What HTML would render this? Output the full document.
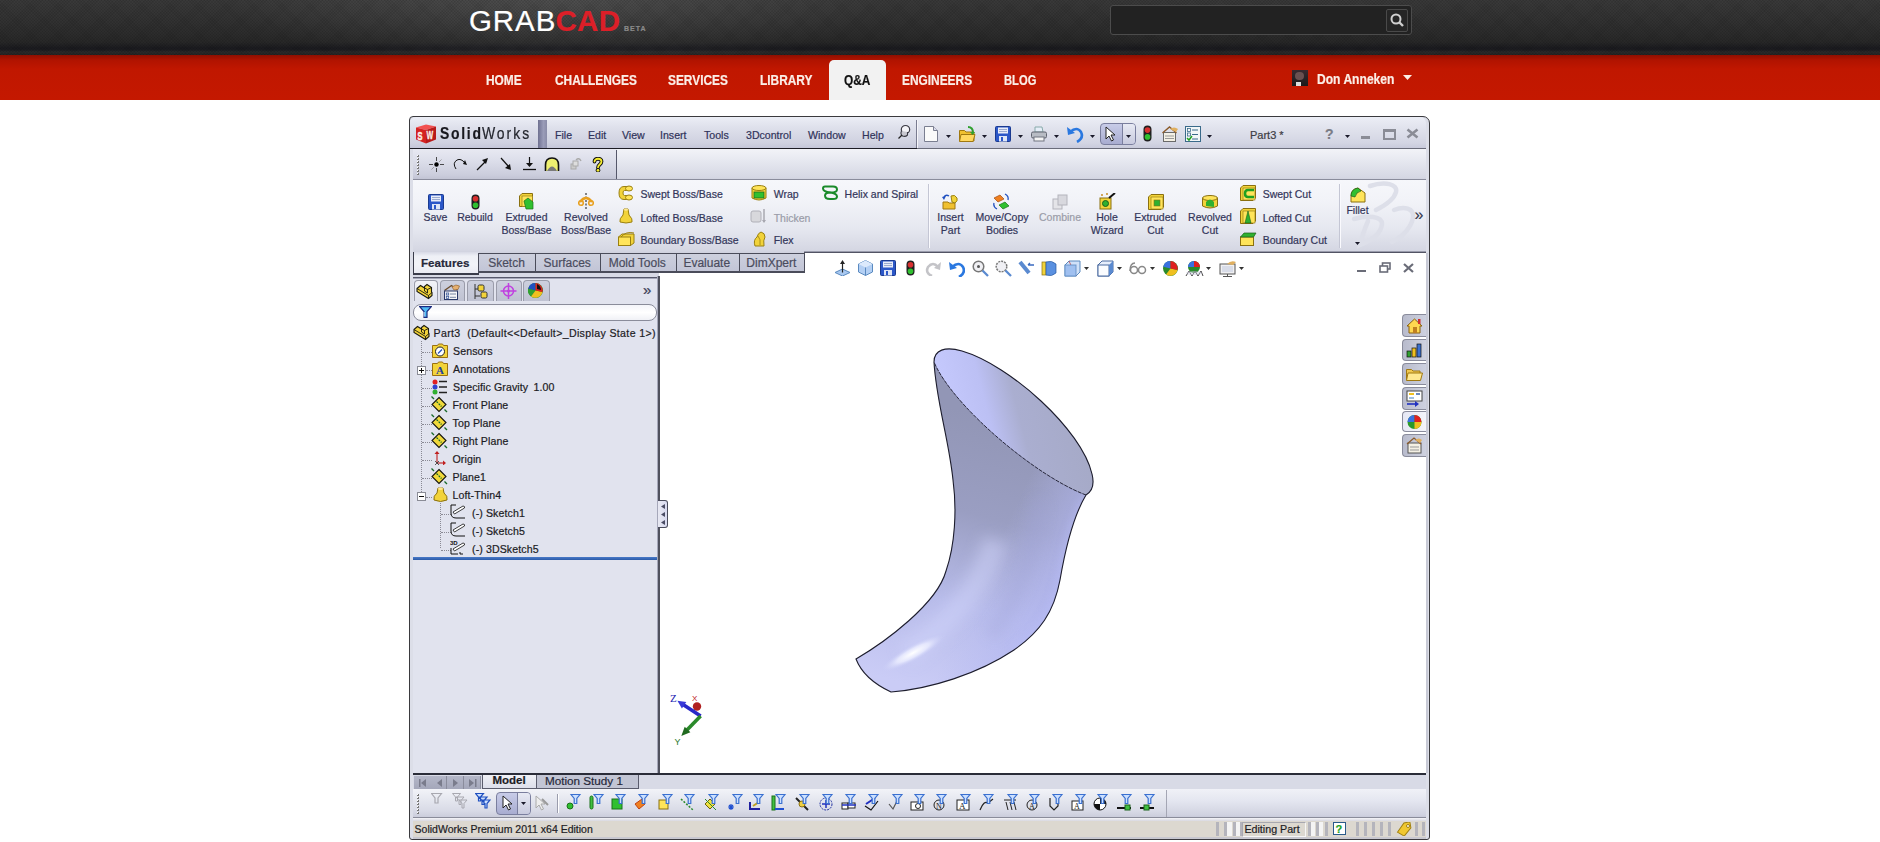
<!DOCTYPE html><html><head><meta charset="utf-8"><style>
html,body{margin:0;padding:0;}
body{width:1880px;height:842px;overflow:hidden;position:relative;background:#fff;font-family:"Liberation Sans", sans-serif;}
.t{position:absolute;white-space:nowrap;-webkit-text-stroke:0.2px currentColor;}
</style></head><body>

<div style="position:absolute;left:0px;top:0px;width:1880px;height:55px;background:radial-gradient(ellipse 330px 70px at 560px 0px,rgba(255,255,255,0.11),rgba(255,255,255,0) 100%),linear-gradient(#393939 0px,#323232 20px,#282828 42px,#1b1b1f 48px,#1d1d21 50px,#2a2a2a 52px,#242424 55px);"></div>
<div style="position:absolute;left:0px;top:0px;width:1880px;height:55px;background:repeating-linear-gradient(45deg,rgba(0,0,0,0.08) 0px,rgba(0,0,0,0.08) 1px,rgba(0,0,0,0) 1px,rgba(0,0,0,0) 2.2px),repeating-linear-gradient(-45deg,rgba(0,0,0,0.08) 0px,rgba(0,0,0,0.08) 1px,rgba(0,0,0,0) 1px,rgba(0,0,0,0) 2.2px);"></div>
<div style="position:absolute;left:0px;top:55px;width:1880px;height:45px;background:linear-gradient(#8e0f00 0px,#b01300 5px,#c01700 14px,#c41800 100%);"></div>
<div class="t" style="left:469px;top:6.03px;font-size:29.5px;line-height:29.5px;color:#ffffff;font-weight:normal;letter-spacing:0.9px;">GRAB</div>
<div class="t" style="left:555.5px;top:6.03px;font-size:29.5px;line-height:29.5px;color:#dc1f28;font-weight:bold;letter-spacing:0.3px;">CAD</div>
<div class="t" style="left:624px;top:25.07px;font-size:7px;line-height:7px;color:#8a8a8a;font-weight:bold;letter-spacing:1px;">BETA</div>
<div style="position:absolute;left:1110px;top:5px;width:302px;height:30px;background:#222;border:1px solid #4c4c4c;border-radius:3px;box-sizing:border-box;"></div>
<div style="position:absolute;left:1386px;top:9px;width:22px;height:23px;background:#262626;border:1px solid #4a4a4a;border-radius:2px;box-sizing:border-box;"></div>
<svg style="position:absolute;left:1389px;top:12px;" width="16" height="16" viewBox="0 0 16 16"><circle cx="7" cy="7" r="4.5" fill="none" stroke="#d0d0d0" stroke-width="2"/><line x1="10" y1="10" x2="14" y2="14" stroke="#d0d0d0" stroke-width="2.4"/></svg>
<div style="position:absolute;left:829px;top:60px;width:57px;height:40px;background:#f2f2f2;border-radius:5px 5px 0 0;"></div>
<div class="t nav" style="left:486px;top:73.15px;font-size:14px;line-height:14px;color:#fbeee6;font-weight:bold;width:36px;"><span style="display:inline-block;transform-origin:0 0;transform:scaleX(0.85);">HOME</span></div>
<div class="t nav" style="left:555px;top:73.15px;font-size:14px;line-height:14px;color:#fbeee6;font-weight:bold;width:81px;"><span style="display:inline-block;transform-origin:0 0;transform:scaleX(0.85);">CHALLENGES</span></div>
<div class="t nav" style="left:668px;top:73.15px;font-size:14px;line-height:14px;color:#fbeee6;font-weight:bold;width:60px;"><span style="display:inline-block;transform-origin:0 0;transform:scaleX(0.85);">SERVICES</span></div>
<div class="t nav" style="left:760px;top:73.15px;font-size:14px;line-height:14px;color:#fbeee6;font-weight:bold;width:53px;"><span style="display:inline-block;transform-origin:0 0;transform:scaleX(0.85);">LIBRARY</span></div>
<div class="t nav" style="left:844px;top:73.15px;font-size:14px;line-height:14px;color:#111;font-weight:bold;width:27px;"><span style="display:inline-block;transform-origin:0 0;transform:scaleX(0.85);">Q&amp;A</span></div>
<div class="t nav" style="left:902px;top:73.15px;font-size:14px;line-height:14px;color:#fbeee6;font-weight:bold;width:70px;"><span style="display:inline-block;transform-origin:0 0;transform:scaleX(0.85);">ENGINEERS</span></div>
<div class="t nav" style="left:1004px;top:73.15px;font-size:14px;line-height:14px;color:#fbeee6;font-weight:bold;width:32px;"><span style="display:inline-block;transform-origin:0 0;transform:scaleX(0.8);">BLOG</span></div>
<div style="position:absolute;left:1292px;top:70px;width:16px;height:16px;background:linear-gradient(#3a2a30,#1a1a1a);"></div>
<div style="position:absolute;left:1295px;top:72px;width:9px;height:8px;background:#6a5050;border-radius:4px;"></div>
<div style="position:absolute;left:1296px;top:82px;width:5px;height:4px;background:#ddd;"></div>
<div class="t" style="left:1317px;top:72.15px;font-size:14px;line-height:14px;color:#fbeee6;font-weight:bold;transform:scaleX(0.863);transform-origin:0 0;">Don Anneken</div>
<svg style="position:absolute;left:1403px;top:75px;" width="9" height="6" viewBox="0 0 9 6"><polygon points="0,0 9,0 4.5,5" fill="#fbeee6"/></svg>
<div style="position:absolute;left:409px;top:116px;width:1021px;height:724px;background:#dcdee8;border:1px solid #3a3a3e;box-sizing:border-box;border-radius:4px 7px 3px 3px;"></div>
<div style="position:absolute;left:410px;top:117px;width:507px;height:31px;background:linear-gradient(#eceef6 0px,#dfe1ec 10px,#cfd1e0 26px,#c4c6d8 31px);border-radius:6px 0 0 0;"></div>
<div style="position:absolute;left:917px;top:117px;width:509px;height:31px;background:linear-gradient(#eceef6 0px,#e2e4ee 10px,#d3d5e3 26px,#c8cadb 31px);border-radius:0 6px 0 0;"></div>
<div style="position:absolute;left:410px;top:148px;width:507px;height:1px;background:#1c1c24;"></div>
<div style="position:absolute;left:917px;top:148px;width:509px;height:1px;background:#6a6c7a;"></div>
<div style="position:absolute;left:538px;top:120px;width:9px;height:28px;background:linear-gradient(90deg,#6e7090,#9a9cb8 60%,#8a8ca8);"></div>
<div style="position:absolute;left:916px;top:120px;width:1px;height:28px;background:#7a7c90;"></div>
<div style="position:absolute;left:917px;top:120px;width:1px;height:28px;background:#f6f6fa;"></div>
<svg style="position:absolute;left:415px;top:123px;" width="22" height="22" viewBox="0 0 22 22"><polygon points="1,4.5 11,1.5 21,3.5 11,7" fill="#f25050"/><polygon points="1,4.5 11,7 11,20.5 1,16.5" fill="#d42222"/><polygon points="11,7 21,3.5 21,16.5 11,20.5" fill="#b81a1a"/><g transform="translate(2.4,16.8) scale(0.82,1.28)"><text x="0" y="0" font-family="Liberation Sans" font-weight="bold" font-size="9" fill="#fbeee6" stroke="#fbeee6" stroke-width="0.45">S</text></g><g transform="translate(11.4,16.2) scale(0.78,1.25)"><text x="0" y="0" font-family="Liberation Sans" font-weight="bold" font-size="9" fill="#fbeee6" stroke="#fbeee6" stroke-width="0.3">W</text></g></svg>
<div class="t" style="left:439.5px;top:125.21px;font-size:17px;line-height:17px;color:#18181e;font-weight:bold;letter-spacing:2.1px;transform:scaleX(0.82);transform-origin:0 0;">Solid</div>
<div class="t" style="left:481.5px;top:125.21px;font-size:17px;line-height:17px;color:#24262e;font-weight:normal;letter-spacing:2.4px;transform:scaleX(0.82);transform-origin:0 0;">Works</div>
<div class="t" style="left:555px;top:130.33px;font-size:10.6px;line-height:10.6px;color:#30335a;font-weight:normal;">File</div>
<div class="t" style="left:588px;top:130.33px;font-size:10.6px;line-height:10.6px;color:#30335a;font-weight:normal;">Edit</div>
<div class="t" style="left:622px;top:130.33px;font-size:10.6px;line-height:10.6px;color:#30335a;font-weight:normal;">View</div>
<div class="t" style="left:660px;top:130.33px;font-size:10.6px;line-height:10.6px;color:#30335a;font-weight:normal;">Insert</div>
<div class="t" style="left:704px;top:130.33px;font-size:10.6px;line-height:10.6px;color:#30335a;font-weight:normal;">Tools</div>
<div class="t" style="left:746px;top:130.33px;font-size:10.6px;line-height:10.6px;color:#30335a;font-weight:normal;">3Dcontrol</div>
<div class="t" style="left:808px;top:130.33px;font-size:10.6px;line-height:10.6px;color:#30335a;font-weight:normal;">Window</div>
<div class="t" style="left:862px;top:130.33px;font-size:10.6px;line-height:10.6px;color:#30335a;font-weight:normal;">Help</div>
<svg style="position:absolute;left:897px;top:124px;" width="14" height="16" viewBox="0 0 14 16"><ellipse cx="8.5" cy="5.5" rx="4.2" ry="4" fill="#f4f4f8" stroke="#3a3a44" stroke-width="1.2"/><path d="M4.5,7 q-1.5,3 1,5 q3,1 5,-1 l0,-3" fill="#c8c8d0" stroke="#3a3a44" stroke-width="1.1"/><line x1="5" y1="11" x2="1.5" y2="14.5" stroke="#222" stroke-width="1.2"/></svg>
<svg style="position:absolute;left:924px;top:126px;" width="14" height="16" viewBox="0 0 14 16"><path d="M0.5,0.5 h9 l4,4 v11 h-13 z" fill="#fafafa" stroke="#7a7e90"/><path d="M9.5,0.5 v4 h4" fill="#dde" stroke="#7a7e90"/></svg>
<svg style="position:absolute;left:946px;top:135px;" width="6" height="4" viewBox="0 0 6 4"><polygon points="0,0 5,0 2.5,3" fill="#1a1a2a"/></svg>
<svg style="position:absolute;left:959px;top:126px;" width="17" height="16" viewBox="0 0 17 16"><path d="M0.5,4.5 h5 l1.5,1.5 h8 v9 h-14.5 z" fill="#f0c030" stroke="#a07810"/><path d="M2,8.5 h14 l-2,7 h-13.5 z" fill="#ffd860" stroke="#a07810"/><path d="M9,1 q5,0 5,6" fill="none" stroke="#30a030" stroke-width="2"/><polygon points="11,6 16,6 13.5,9" fill="#30a030"/></svg>
<svg style="position:absolute;left:982px;top:135px;" width="6" height="4" viewBox="0 0 6 4"><polygon points="0,0 5,0 2.5,3" fill="#1a1a2a"/></svg>
<svg style="position:absolute;left:995px;top:126px;" width="16" height="16" viewBox="0 0 16 16"><rect x="0.5" y="0.5" width="15" height="15" rx="1" fill="#2b57c8" stroke="#1a3a90"/><rect x="3" y="1.5" width="10" height="6" fill="#e8ecf8"/><line x1="4" y1="3.5" x2="12" y2="3.5" stroke="#9aaad0"/><line x1="4" y1="5.5" x2="12" y2="5.5" stroke="#9aaad0"/><rect x="4" y="10" width="8" height="5.5" fill="#dfe6f6"/><rect x="6" y="11" width="2" height="4" fill="#2b57c8"/></svg>
<svg style="position:absolute;left:1018px;top:135px;" width="6" height="4" viewBox="0 0 6 4"><polygon points="0,0 5,0 2.5,3" fill="#1a1a2a"/></svg>
<svg style="position:absolute;left:1031px;top:126px;" width="16" height="16" viewBox="0 0 16 16"><path d="M4,1 h7 l1,5 h-8 z" fill="#e6eef8" stroke="#8aa"/><rect x="0.5" y="6" width="15" height="6" rx="1.5" fill="#b8bcc4" stroke="#606470"/><rect x="3" y="11" width="10" height="4" fill="#f4f4f4" stroke="#707480"/></svg>
<svg style="position:absolute;left:1054px;top:135px;" width="6" height="4" viewBox="0 0 6 4"><polygon points="0,0 5,0 2.5,3" fill="#1a1a2a"/></svg>
<svg style="position:absolute;left:1066px;top:125px;" width="18" height="18" viewBox="0 0 18 18"><path d="M4,7 q7,-6 11,0 q3,6 -4,10" fill="none" stroke="#2a78e0" stroke-width="2.6"/><polygon points="1,2 2,10 9,8" fill="#2a78e0"/></svg>
<svg style="position:absolute;left:1090px;top:135px;" width="6" height="4" viewBox="0 0 6 4"><polygon points="0,0 5,0 2.5,3" fill="#1a1a2a"/></svg>
<div style="position:absolute;left:1100px;top:123px;width:36px;height:22px;background:linear-gradient(#c8cce8,#a8acd0);border:1px solid #7a7e9e;border-radius:4px;box-sizing:border-box;"></div>
<div style="position:absolute;left:1122px;top:124px;width:13px;height:20px;background:linear-gradient(#e8eaf4,#c8cade);border-radius:0 3px 3px 0;"></div>
<div style="position:absolute;left:1122px;top:124px;width:1px;height:20px;background:#7a7e9e;"></div>
<svg style="position:absolute;left:1104px;top:126px;" width="14" height="16" viewBox="0 0 14 16"><path d="M2,1 v12 l3,-3 l2.5,5 l2,-1 l-2.5,-5 h4 z" fill="#fff" stroke="#222" stroke-width="1"/></svg>
<svg style="position:absolute;left:1125.5px;top:135px;" width="6" height="4" viewBox="0 0 6 4"><polygon points="0,0 5,0 2.5,3" fill="#1a1a2a"/></svg>
<svg style="position:absolute;left:1143px;top:125px;" width="9" height="17" viewBox="0 0 9 17"><rect x="0.5" y="0.5" width="8" height="16" rx="4" fill="#202020"/><circle cx="4.5" cy="5.1" r="2.8" fill="#d83030"/><circle cx="4.5" cy="11.9" r="2.8" fill="#30c030"/></svg>
<svg style="position:absolute;left:1162px;top:126px;" width="17" height="16" viewBox="0 0 17 16"><rect x="1.5" y="6.5" width="12" height="9" fill="#f4f0e4" stroke="#6a6a6a"/><line x1="3" y1="10" x2="12" y2="10" stroke="#999"/><line x1="3" y1="12.5" x2="12" y2="12.5" stroke="#999"/><path d="M0.5,7 l7,-6 l7,6" fill="none" stroke="#8a5a2a" stroke-width="1.4"/><path d="M8,3 q4,-3 8,0 l-2,3 z" fill="#e0b060"/></svg>
<svg style="position:absolute;left:1185px;top:126px;" width="16" height="16" viewBox="0 0 16 16"><rect x="0.5" y="0.5" width="15" height="15" fill="#f2f6f8" stroke="#3a6a8a"/><rect x="2.5" y="2.5" width="3" height="3" fill="none" stroke="#3a6a8a" stroke-width="0.8"/><rect x="2.5" y="7" width="3" height="3" fill="none" stroke="#3a6a8a" stroke-width="0.8"/><line x1="7" y1="4" x2="13" y2="4" stroke="#3a6a8a"/><line x1="7" y1="8.5" x2="13" y2="8.5" stroke="#3a6a8a"/><line x1="7" y1="13" x2="13" y2="13" stroke="#3a6a8a"/><path d="M2,12 l2,2 l3,-4" fill="none" stroke="#20a020" stroke-width="1.5"/></svg>
<svg style="position:absolute;left:1207px;top:135px;" width="6" height="4" viewBox="0 0 6 4"><polygon points="0,0 5,0 2.5,3" fill="#1a1a2a"/></svg>
<div class="t" style="left:1325px;top:127.15px;font-size:14px;line-height:14px;color:#7a7c86;font-weight:bold;">?</div>
<svg style="position:absolute;left:1345px;top:135px;" width="6" height="4" viewBox="0 0 6 4"><polygon points="0,0 5,0 2.5,3" fill="#1a1a2a"/></svg>
<div style="position:absolute;left:1361px;top:136px;width:9px;height:3px;background:#8a8c96;"></div>
<div style="position:absolute;left:1383px;top:129px;width:13px;height:11px;border:2px solid #8a8c96;border-top-width:3px;box-sizing:border-box;"></div>
<svg style="position:absolute;left:1406px;top:128px;" width="13" height="11" viewBox="0 0 13 11"><path d="M1.5,1.5 L11.5,9.5 M11.5,1.5 L1.5,9.5" stroke="#8a8c96" stroke-width="2.6"/></svg>
<div class="t" style="left:1250px;top:129.69px;font-size:11px;line-height:11px;color:#3c3c44;font-weight:normal;">Part3 *</div>
<div style="position:absolute;left:413px;top:149px;width:1013px;height:31px;background:linear-gradient(#f2f3f8 0px,#e6e8f0 12px,#d6d8e4 28px,#cfd1de 31px);"></div>
<div style="position:absolute;left:413px;top:149px;width:204px;height:30px;background:linear-gradient(#e8e9f2 0px,#dcdeea 12px,#cbcddc 26px,#c2c4d4 30px);"></div>
<div style="position:absolute;left:616px;top:150px;width:1px;height:29px;background:#55576a;"></div>
<div style="position:absolute;left:413px;top:179px;width:1013px;height:1px;background:#8a8c9c;"></div>
<div style="position:absolute;left:417px;top:155px;width:2px;height:2px;background:#fff;border-right:1px solid #777;border-bottom:1px solid #777;box-sizing:content-box;width:1px;height:1px;"></div>
<div style="position:absolute;left:417px;top:158px;width:2px;height:2px;background:#fff;border-right:1px solid #777;border-bottom:1px solid #777;box-sizing:content-box;width:1px;height:1px;"></div>
<div style="position:absolute;left:417px;top:161px;width:2px;height:2px;background:#fff;border-right:1px solid #777;border-bottom:1px solid #777;box-sizing:content-box;width:1px;height:1px;"></div>
<div style="position:absolute;left:417px;top:164px;width:2px;height:2px;background:#fff;border-right:1px solid #777;border-bottom:1px solid #777;box-sizing:content-box;width:1px;height:1px;"></div>
<div style="position:absolute;left:417px;top:167px;width:2px;height:2px;background:#fff;border-right:1px solid #777;border-bottom:1px solid #777;box-sizing:content-box;width:1px;height:1px;"></div>
<div style="position:absolute;left:417px;top:170px;width:2px;height:2px;background:#fff;border-right:1px solid #777;border-bottom:1px solid #777;box-sizing:content-box;width:1px;height:1px;"></div>
<div style="position:absolute;left:417px;top:173px;width:2px;height:2px;background:#fff;border-right:1px solid #777;border-bottom:1px solid #777;box-sizing:content-box;width:1px;height:1px;"></div>
<svg style="position:absolute;left:429px;top:157px;" width="15" height="15" viewBox="0 0 15 15"><circle cx="7.5" cy="7.5" r="2.2" fill="#000"/><path d="M7.5,0 v4 M7.5,11 v4 M0,7.5 h4 M11,7.5 h4" stroke="#222" stroke-width="0.8"/><path d="M2.5,12.5 l2.5,-2.5 M10,5 l2.5,-2.5" stroke="#777" stroke-width="0.6"/></svg>
<svg style="position:absolute;left:453px;top:157px;" width="15" height="15" viewBox="0 0 15 15"><path d="M3,12 q-4,-6 1,-9 q4,-2 8,3" fill="none" stroke="#111" stroke-width="1"/><polygon points="10,7 14,8 12,3" fill="#111"/></svg>
<svg style="position:absolute;left:476px;top:157px;" width="13" height="14" viewBox="0 0 13 14"><line x1="1" y1="13" x2="10" y2="4" stroke="#111" stroke-width="1.2"/><polygon points="12,1 6,3 10,7" fill="#111"/></svg>
<svg style="position:absolute;left:500px;top:157px;" width="12" height="14" viewBox="0 0 12 14"><line x1="1" y1="1" x2="9" y2="10" stroke="#111" stroke-width="1.2"/><polygon points="11,13 5,11 10,7" fill="#111"/></svg>
<svg style="position:absolute;left:523px;top:157px;" width="13" height="14" viewBox="0 0 13 14"><line x1="6.5" y1="0" x2="6.5" y2="9" stroke="#111" stroke-width="1.2"/><polygon points="3,6 10,6 6.5,10" fill="#111"/><line x1="0" y1="12.5" x2="13" y2="12.5" stroke="#111" stroke-width="1.3"/></svg>
<svg style="position:absolute;left:544px;top:157px;" width="16" height="15" viewBox="0 0 16 15"><path d="M1.5,14 v-6 q0,-7 6.5,-7 q6.5,0 6.5,7 v6" fill="#eef070" stroke="#111" stroke-width="1.6"/><path d="M3,14 q5,-9 10,0 z" fill="#7a7a7a"/></svg>
<svg style="position:absolute;left:570px;top:157px;" width="12" height="14" viewBox="0 0 12 14"><rect x="1" y="7" width="5" height="5" fill="#ccc" stroke="#aaa"/><rect x="3" y="4" width="5" height="5" fill="#ddd" stroke="#aaa"/><path d="M6,3 q3,-3 5,1" fill="none" stroke="#aaa" stroke-width="1.4"/></svg>
<svg style="position:absolute;left:592px;top:157px;" width="12" height="15" viewBox="0 0 12 15"><path d="M2.5,4.5 C2.5,0.8 9.5,0.8 9.5,4.5 C9.5,7.5 6,7.5 6,10.5" fill="none" stroke="#111" stroke-width="3.8" stroke-linecap="round"/><path d="M2.5,4.5 C2.5,0.8 9.5,0.8 9.5,4.5 C9.5,7.5 6,7.5 6,10.5" fill="none" stroke="#f4ec30" stroke-width="1.8" stroke-linecap="round"/><circle cx="6" cy="13.3" r="1.9" fill="#f4ec30" stroke="#111" stroke-width="1"/></svg>
<div style="position:absolute;left:413px;top:180px;width:1013px;height:73px;background:linear-gradient(#f6f7fb 0px,#f2f3f8 20px,#e6e8f0 48px,#d5d7e3 70px,#cfd1de 73px);"></div>
<div style="position:absolute;left:804px;top:251px;width:622px;height:1px;background:#9a9cac;"></div>
<div style="position:absolute;left:804px;top:252px;width:622px;height:2px;background:#525464;"></div>
<svg style="position:absolute;left:428px;top:194px;" width="16" height="16" viewBox="0 0 16 16"><rect x="0.5" y="0.5" width="15" height="15" rx="1" fill="#2b57c8" stroke="#1a3a90"/><rect x="3" y="1.5" width="10" height="6" fill="#e8ecf8"/><line x1="4" y1="3.5" x2="12" y2="3.5" stroke="#9aaad0"/><line x1="4" y1="5.5" x2="12" y2="5.5" stroke="#9aaad0"/><rect x="4" y="10" width="8" height="5.5" fill="#dfe6f6"/><rect x="6" y="11" width="2" height="4" fill="#2b57c8"/></svg>
<div class="t rb" style="left:395.5px;top:212.11px;width:80px;text-align:center;font-size:10.5px;line-height:10.5px;color:#33365a;">Save</div>
<svg style="position:absolute;left:471px;top:194px;" width="9" height="16" viewBox="0 0 9 16"><rect x="0.5" y="0.5" width="8" height="15" rx="4" fill="#202020"/><circle cx="4.5" cy="4.8" r="2.8" fill="#d83030"/><circle cx="4.5" cy="11.2" r="2.8" fill="#30c030"/></svg>
<div class="t rb" style="left:435.0px;top:212.11px;width:80px;text-align:center;font-size:10.5px;line-height:10.5px;color:#33365a;">Rebuild</div>
<svg style="position:absolute;left:519px;top:193px;" width="17" height="17" viewBox="0 0 17 17"><polygon points="0.5,3 3,0.5 13.5,0.5 13.5,11 11,13.5 0.5,13.5" fill="#f2d33a" stroke="#8a7010"/><rect x="3" y="3" width="10.5" height="10.5" fill="#ffe45a" stroke="#8a7010" stroke-width="0.6"/><polygon points="5,8 9,5 14,9 14,16 7,16" fill="#30c030" stroke="#1a701a" stroke-width="0.7"/></svg>
<div class="t rb" style="left:486.5px;top:212.11px;width:80px;text-align:center;font-size:10.5px;line-height:10.5px;color:#33365a;">Extruded</div>
<div class="t rb" style="left:486.5px;top:225.11px;width:80px;text-align:center;font-size:10.5px;line-height:10.5px;color:#33365a;">Boss/Base</div>
<svg style="position:absolute;left:578px;top:193px;" width="16" height="17" viewBox="0 0 16 17"><line x1="8" y1="0" x2="8" y2="17" stroke="#111" stroke-dasharray="2,1.5"/><path d="M2,9 q6,-8 12,0" fill="none" stroke="#e8a020" stroke-width="2.4"/><circle cx="3" cy="10" r="2.3" fill="none" stroke="#e8a020" stroke-width="1.6"/><circle cx="13" cy="10" r="2.3" fill="none" stroke="#e8a020" stroke-width="1.6"/></svg>
<div class="t rb" style="left:546.0px;top:212.11px;width:80px;text-align:center;font-size:10.5px;line-height:10.5px;color:#33365a;">Revolved</div>
<div class="t rb" style="left:546.0px;top:225.11px;width:80px;text-align:center;font-size:10.5px;line-height:10.5px;color:#33365a;">Boss/Base</div>
<svg style="position:absolute;left:618px;top:185px;" width="17" height="16" viewBox="0 0 17 16"><path d="M9,1.5 h-3 q-5,0 -5,6.5 q0,6.5 5,6.5 h3 v-4 h-2.5 q-1.5,0 -1.5,-2.5 q0,-2.5 1.5,-2.5 h2.5 z" fill="#f2d33a" stroke="#9a8010"/><ellipse cx="11" cy="3.5" rx="3.5" ry="2.5" fill="#ffe45a" stroke="#9a8010"/><ellipse cx="11" cy="12.5" rx="3.5" ry="2.5" fill="#ffe45a" stroke="#9a8010"/></svg>
<div class="t" style="left:640.5px;top:189.31px;font-size:10.5px;line-height:10.5px;color:#33365a;font-weight:normal;">Swept Boss/Base</div>
<svg style="position:absolute;left:619px;top:208px;" width="14" height="16" viewBox="0 0 14 16"><path d="M5,1 h4 l1,6 q4,4 3,7 q-6,2 -12,0 q-1,-3 3,-7 z" fill="#f2d33a" stroke="#9a8010"/><ellipse cx="7" cy="1.8" rx="2.2" ry="1" fill="#ffe890"/></svg>
<div class="t" style="left:640.5px;top:212.51px;font-size:10.5px;line-height:10.5px;color:#33365a;font-weight:normal;">Lofted Boss/Base</div>
<svg style="position:absolute;left:618px;top:231px;" width="17" height="15" viewBox="0 0 17 15"><polygon points="0.5,6 4,3 16,3 16,12 12.5,14.5 0.5,14.5" fill="#f2d33a" stroke="#9a8010"/><rect x="0.5" y="6" width="12" height="8.5" fill="#ffe45a" stroke="#9a8010"/><path d="M3,6 q5,-6 13,-4" fill="none" stroke="#9a8010"/></svg>
<div class="t" style="left:640.5px;top:235.41px;font-size:10.5px;line-height:10.5px;color:#33365a;font-weight:normal;">Boundary Boss/Base</div>
<svg style="position:absolute;left:751px;top:185px;" width="16" height="16" viewBox="0 0 16 16"><path d="M1,3 v10 q7,4 14,0 v-10" fill="#f2d33a" stroke="#9a8010"/><ellipse cx="8" cy="3" rx="7" ry="2.5" fill="#ffe45a" stroke="#9a8010"/><rect x="3" y="7" width="10" height="6" fill="#30c030" stroke="#1a601a" stroke-width="0.7"/></svg>
<div class="t" style="left:773.7px;top:189.31px;font-size:10.5px;line-height:10.5px;color:#33365a;font-weight:normal;">Wrap</div>
<svg style="position:absolute;left:750px;top:208px;" width="17" height="16" viewBox="0 0 17 16"><rect x="1" y="3" width="10" height="11" rx="2" fill="#d8d8dc" stroke="#b0b0b8"/><line x1="14" y1="1" x2="14" y2="14" stroke="#a8a8b0" stroke-width="1.5"/><polygon points="12,12 16,12 14,15" fill="#a8a8b0"/></svg>
<div class="t" style="left:773.7px;top:212.51px;font-size:10.5px;line-height:10.5px;color:#9a9ca8;font-weight:normal;">Thicken</div>
<svg style="position:absolute;left:752px;top:231px;" width="14" height="16" viewBox="0 0 14 16"><path d="M3,15 q-2,-6 2,-9 q1,-4 4,-5 q4,1 4,5 q-2,3 -1,9 z" fill="#f2d33a" stroke="#9a8010"/><path d="M6,5 q3,3 2,9" fill="none" stroke="#9a8010" stroke-width="0.8"/></svg>
<div class="t" style="left:773.7px;top:235.41px;font-size:10.5px;line-height:10.5px;color:#33365a;font-weight:normal;">Flex</div>
<svg style="position:absolute;left:822px;top:185px;" width="16" height="16" viewBox="0 0 16 16"><path d="M3,1.5 h8 q4,0 4,3 q0,3 -6,3 q-6,0 -6,3 q0,3.5 5,3.5 h5 M3,1.5 q-2,0 -2,2 q0,3 7,4 q7,1 7,4 q0,2.5 -4,2.5" fill="none" stroke="#1a8a2a" stroke-width="2"/></svg>
<div class="t" style="left:844.6px;top:189.31px;font-size:10.5px;line-height:10.5px;color:#33365a;font-weight:normal;">Helix and Spiral</div>
<div style="position:absolute;left:928px;top:184px;width:1px;height:64px;background:#c4c6d4;"></div>
<div style="position:absolute;left:929px;top:184px;width:1px;height:64px;background:#fafafe;"></div>
<svg style="position:absolute;left:942px;top:194px;" width="17" height="16" viewBox="0 0 17 16"><path d="M1,8 h5 l1,1 h6 v6 h-12 z" fill="#f0c030" stroke="#a07810"/><path d="M2,3 q2,-3 5,-1" fill="none" stroke="#2050c0" stroke-width="1.4"/><polygon points="0,3 4,2 2,6" fill="#2050c0"/><path d="M9,2 q4,-2 6,2 q1,3 -2,5 l-3,-1 z" fill="#f2d33a" stroke="#9a8010"/></svg>
<div class="t rb" style="left:910.5px;top:212.11px;width:80px;text-align:center;font-size:10.5px;line-height:10.5px;color:#33365a;">Insert</div>
<div class="t rb" style="left:910.5px;top:225.11px;width:80px;text-align:center;font-size:10.5px;line-height:10.5px;color:#33365a;">Part</div>
<svg style="position:absolute;left:993px;top:193px;" width="17" height="17" viewBox="0 0 17 17"><polygon points="1,5 7,2 11,6 5,9" fill="#f08020" stroke="#a04a10" stroke-width="0.7"/><polygon points="6,12 12,9 16,13 10,16" fill="#30c030" stroke="#1a701a" stroke-width="0.7"/><path d="M12,1 q4,2 3,6" fill="none" stroke="#2050c0" stroke-width="1.3"/><path d="M4,16 q-4,-2 -3,-6" fill="none" stroke="#2050c0" stroke-width="1.3"/></svg>
<div class="t rb" style="left:962.0px;top:212.11px;width:80px;text-align:center;font-size:10.5px;line-height:10.5px;color:#33365a;">Move/Copy</div>
<div class="t rb" style="left:962.0px;top:225.11px;width:80px;text-align:center;font-size:10.5px;line-height:10.5px;color:#33365a;">Bodies</div>
<svg style="position:absolute;left:1052px;top:194px;" width="16" height="16" viewBox="0 0 16 16"><rect x="1" y="5" width="9" height="10" fill="#e4e4e8" stroke="#b4b4bc"/><rect x="6" y="1" width="9" height="10" fill="#d8d8de" stroke="#b4b4bc"/></svg>
<div class="t rb" style="left:1020.0px;top:212.11px;width:80px;text-align:center;font-size:10.5px;line-height:10.5px;color:#9a9ca8;">Combine</div>
<svg style="position:absolute;left:1099px;top:193px;" width="17" height="17" viewBox="0 0 17 17"><rect x="1" y="5" width="11" height="11" fill="#f2d33a" stroke="#8a7010"/><circle cx="6.5" cy="10.5" r="3" fill="#30b030" stroke="#1a601a"/><line x1="10" y1="5" x2="16" y2="0" stroke="#111" stroke-width="2"/><circle cx="3" cy="2" r="0.9" fill="#c08010"/><circle cx="8" cy="1" r="0.9" fill="#c08010"/></svg>
<div class="t rb" style="left:1067.0px;top:212.11px;width:80px;text-align:center;font-size:10.5px;line-height:10.5px;color:#33365a;">Hole</div>
<div class="t rb" style="left:1067.0px;top:225.11px;width:80px;text-align:center;font-size:10.5px;line-height:10.5px;color:#33365a;">Wizard</div>
<svg style="position:absolute;left:1148px;top:194px;" width="16" height="16" viewBox="0 0 16 16"><polygon points="0.5,3 3,0.5 15.5,0.5 15.5,13 13,15.5 0.5,15.5" fill="#f2d33a" stroke="#8a7010"/><rect x="3" y="3" width="12" height="12" fill="#ffe45a" stroke="#8a7010" stroke-width="0.6"/><rect x="6" y="6" width="6" height="6" fill="#30b030" stroke="#8a7010" stroke-width="0.6"/></svg>
<div class="t rb" style="left:1115.3px;top:212.11px;width:80px;text-align:center;font-size:10.5px;line-height:10.5px;color:#33365a;">Extruded</div>
<div class="t rb" style="left:1115.3px;top:225.11px;width:80px;text-align:center;font-size:10.5px;line-height:10.5px;color:#33365a;">Cut</div>
<svg style="position:absolute;left:1202px;top:195px;" width="16" height="14" viewBox="0 0 16 14"><path d="M0.5,3 v8 q7.5,4 15,0 v-8" fill="#f2d33a" stroke="#8a7010"/><ellipse cx="8" cy="3" rx="7.5" ry="2.5" fill="#ffe45a" stroke="#8a7010"/><path d="M4,11 v-4 q4,-5 8,0 v5" fill="#30b030"/></svg>
<div class="t rb" style="left:1170.0px;top:212.11px;width:80px;text-align:center;font-size:10.5px;line-height:10.5px;color:#33365a;">Revolved</div>
<div class="t rb" style="left:1170.0px;top:225.11px;width:80px;text-align:center;font-size:10.5px;line-height:10.5px;color:#33365a;">Cut</div>
<svg style="position:absolute;left:1240px;top:185px;" width="16" height="16" viewBox="0 0 16 16"><polygon points="0.5,3 3,0.5 15.5,0.5 15.5,13 13,15.5 0.5,15.5" fill="#f2d33a" stroke="#8a7010"/><rect x="3" y="3" width="12" height="12" fill="#ffe45a" stroke="#8a7010" stroke-width="0.6"/><path d="M14,5 h-6 q-3,0 -3,3.5 q0,3.5 3,3.5 h6" fill="none" stroke="#20a020" stroke-width="2.5"/></svg>
<div class="t" style="left:1262.7px;top:189.31px;font-size:10.5px;line-height:10.5px;color:#33365a;font-weight:normal;">Swept Cut</div>
<svg style="position:absolute;left:1240px;top:208px;" width="16" height="16" viewBox="0 0 16 16"><polygon points="0.5,3 3,0.5 15.5,0.5 15.5,13 13,15.5 0.5,15.5" fill="#f2d33a" stroke="#8a7010"/><rect x="3" y="3" width="12" height="12" fill="#ffe45a" stroke="#8a7010" stroke-width="0.6"/><path d="M5,15 l3,-12 l3,12 z" fill="#30b030" stroke="#1a601a" stroke-width="0.6"/></svg>
<div class="t" style="left:1262.7px;top:212.51px;font-size:10.5px;line-height:10.5px;color:#33365a;font-weight:normal;">Lofted Cut</div>
<svg style="position:absolute;left:1240px;top:231px;" width="17" height="15" viewBox="0 0 17 15"><rect x="0.5" y="6" width="13" height="8.5" fill="#ffe45a" stroke="#8a7010"/><polygon points="0.5,6 4,2 16,2 13.5,6" fill="#30b030" stroke="#1a601a" stroke-width="0.7"/></svg>
<div class="t" style="left:1262.7px;top:235.41px;font-size:10.5px;line-height:10.5px;color:#33365a;font-weight:normal;">Boundary Cut</div>
<div style="position:absolute;left:1339px;top:184px;width:1px;height:64px;background:#c4c6d4;"></div>
<div style="position:absolute;left:1340px;top:184px;width:1px;height:64px;background:#fafafe;"></div>
<svg style="position:absolute;left:1345px;top:180px;" width="80" height="72" viewBox="0 0 80 72"><g fill="none" stroke="#dddfe9" stroke-width="4.5" stroke-linecap="round"><path d="M25,6 C40,1 53,4 51,12 C49,20 39,26 31,30"/><path d="M9,39 C23,35 37,36 37,44 C36,54 25,61 15,65 C17,56 20,48 23,41"/><path d="M49,30 C59,26 69,28 68,37 C67,46 59,56 47,62"/></g></svg>
<svg style="position:absolute;left:1350px;top:187px;" width="16" height="16" viewBox="0 0 16 16"><path d="M1,9 q0,-7 7,-8 l7,5 v9 h-14 z" fill="#ffe45a" stroke="#8a7010"/><path d="M1,9 q0,-7 7,-8 l3,3 q-5,1 -6,6 z" fill="#30c030" stroke="#1a601a" stroke-width="0.7"/></svg>
<div class="t rb" style="left:1317.5px;top:204.71px;width:80px;text-align:center;font-size:10.5px;line-height:10.5px;color:#33365a;">Fillet</div>
<svg style="position:absolute;left:1354.5px;top:242px;" width="6" height="4" viewBox="0 0 6 4"><polygon points="0,0 5,0 2.5,3" fill="#1a1a2a"/></svg>
<div class="t" style="left:1414.5px;top:206.96px;font-size:16px;line-height:16px;color:#34364a;font-weight:normal;">&#187;</div>
<div style="position:absolute;left:413px;top:253px;width:246px;height:24px;background:#d7d9e5;"></div>
<div style="position:absolute;left:659px;top:253px;width:767px;height:520px;background:#ffffff;"></div>
<div style="position:absolute;left:413px;top:252px;width:66px;height:23px;background:linear-gradient(#d8dae6,#eef0f6 4px,#f2f3f8 60%,#eaebf3);border-left:1px solid #3a3c4a;border-bottom:2px solid #3a3c4a;box-sizing:border-box;"></div>
<div class="t" style="left:421px;top:256.88px;font-size:11.6px;line-height:11.6px;color:#26283a;font-weight:bold;">Features</div>
<div style="position:absolute;left:478px;top:253px;width:58px;height:20px;background:linear-gradient(#cdd0de,#c2c5d6);border:2px solid #4a4c5a;border-top-width:1px;border-right-width:1px;border-left-width:1px;box-sizing:border-box;"></div>
<div class="t" style="left:488.2px;top:256.54px;font-size:12px;line-height:12px;color:#4a4c5e;font-weight:normal;">Sketch</div>
<div style="position:absolute;left:535px;top:253px;width:66px;height:20px;background:linear-gradient(#cdd0de,#c2c5d6);border:2px solid #4a4c5a;border-top-width:1px;border-right-width:1px;border-left-width:1px;box-sizing:border-box;"></div>
<div class="t" style="left:543.5px;top:256.54px;font-size:12px;line-height:12px;color:#4a4c5e;font-weight:normal;">Surfaces</div>
<div style="position:absolute;left:600px;top:253px;width:77px;height:20px;background:linear-gradient(#cdd0de,#c2c5d6);border:2px solid #4a4c5a;border-top-width:1px;border-right-width:1px;border-left-width:1px;box-sizing:border-box;"></div>
<div class="t" style="left:608.7px;top:256.54px;font-size:12px;line-height:12px;color:#4a4c5e;font-weight:normal;">Mold Tools</div>
<div style="position:absolute;left:676px;top:253px;width:64px;height:20px;background:linear-gradient(#cdd0de,#c2c5d6);border:2px solid #4a4c5a;border-top-width:1px;border-right-width:1px;border-left-width:1px;box-sizing:border-box;"></div>
<div class="t" style="left:683.4px;top:256.54px;font-size:12px;line-height:12px;color:#4a4c5e;font-weight:normal;">Evaluate</div>
<div style="position:absolute;left:739px;top:253px;width:66px;height:20px;background:linear-gradient(#cdd0de,#c2c5d6);border:2px solid #4a4c5a;border-top-width:1px;border-right-width:1px;border-left-width:1px;box-sizing:border-box;"></div>
<div class="t" style="left:746.3px;top:256.54px;font-size:12px;line-height:12px;color:#4a4c5e;font-weight:normal;">DimXpert</div>
<div style="position:absolute;left:413px;top:277px;width:246px;height:496px;background:#e1e3ee;"></div>
<div style="position:absolute;left:413px;top:277px;width:246px;height:1px;background:#55576a;"></div>
<div style="position:absolute;left:413px;top:278px;width:246px;height:1px;background:#a4a6b8;"></div>
<div style="position:absolute;left:657px;top:276px;width:1px;height:497px;background:#a6a8ba;"></div>
<div style="position:absolute;left:658px;top:276px;width:2px;height:497px;background:#50525e;"></div>
<div style="position:absolute;left:414px;top:280px;width:24px;height:21px;background:linear-gradient(#f2f3f8,#e1e3ee);border:1px solid #9a9caa;border-bottom:none;border-radius:4px 4px 0 0;box-sizing:border-box;"></div>
<div style="position:absolute;left:440px;top:280px;width:25px;height:21px;background:linear-gradient(#cdd0de,#bfc2d2);border:1px solid #9a9caa;border-bottom:none;border-radius:4px 4px 0 0;box-sizing:border-box;"></div>
<div style="position:absolute;left:467px;top:280px;width:27px;height:21px;background:linear-gradient(#cdd0de,#bfc2d2);border:1px solid #9a9caa;border-bottom:none;border-radius:4px 4px 0 0;box-sizing:border-box;"></div>
<div style="position:absolute;left:496px;top:280px;width:26px;height:21px;background:linear-gradient(#cdd0de,#bfc2d2);border:1px solid #9a9caa;border-bottom:none;border-radius:4px 4px 0 0;box-sizing:border-box;"></div>
<div style="position:absolute;left:523px;top:280px;width:27px;height:21px;background:linear-gradient(#cdd0de,#bfc2d2);border:1px solid #9a9caa;border-bottom:none;border-radius:4px 4px 0 0;box-sizing:border-box;"></div>
<svg style="position:absolute;left:416px;top:283px;" width="17" height="17" viewBox="0 0 17 17"><path d="M1,5.5 L4.5,2.5 L8.5,5 L8.5,3.5 L11,1.5 L15.5,4.5 L15.5,9 L16,9.5 L16,12.5 L12.5,15.5 L1,8.5 Z" fill="#f2d33a" stroke="#1a1a10" stroke-width="1.1"/><path d="M1,5.5 L12.5,12.5 L16,9.5 M12.5,12.5 L12.5,15.5 M8.5,5 L8.5,8 L11.5,10 L11.5,6.5 L15.5,4.5 M11.5,6.5 L8.5,5" fill="none" stroke="#1a1a10" stroke-width="0.9"/></svg>
<svg style="position:absolute;left:443px;top:283px;" width="17" height="17" viewBox="0 0 17 17"><path d="M1.5,7.5 l7,-5 l6,4.5" fill="none" stroke="#6a4a2a" stroke-width="1.3"/><rect x="1.5" y="8" width="13" height="8.5" fill="#f6f6f8" stroke="#2a3a6a" stroke-width="1"/><rect x="3.3" y="10" width="2.4" height="2" fill="none" stroke="#3a5a9a" stroke-width="0.8"/><rect x="3.3" y="13.3" width="2.4" height="2" fill="none" stroke="#3a5a9a" stroke-width="0.8"/><path d="M7,11 h6 M7,14.3 h6" stroke="#6a7a9a" stroke-width="0.9"/><path d="M9,4 q4,-3.5 7.5,-1 l-1.5,3.5 l-4,0.5 z" fill="#e6b070" stroke="#8a5a2a" stroke-width="0.6"/></svg>
<svg style="position:absolute;left:472px;top:283px;" width="17" height="17" viewBox="0 0 17 17"><line x1="3" y1="1" x2="3" y2="16" stroke="#333"/><line x1="3" y1="6" x2="8" y2="6" stroke="#333"/><line x1="3" y1="13" x2="8" y2="13" stroke="#333"/><rect x="6" y="2" width="6" height="6" rx="1.5" fill="#f2d33a" stroke="#333"/><rect x="9" y="9" width="6" height="6" rx="1.5" fill="#f2d33a" stroke="#333"/></svg>
<svg style="position:absolute;left:500px;top:283px;" width="17" height="16" viewBox="0 0 17 16"><circle cx="8.5" cy="8" r="5" fill="none" stroke="#c040e0" stroke-width="1.5"/><path d="M8.5,0 v16 M0.5,8 h16" stroke="#c040e0" stroke-width="1.5"/><circle cx="8.5" cy="8" r="1.5" fill="#c040e0"/></svg>
<svg style="position:absolute;left:527px;top:282px;" width="17" height="17" viewBox="0 0 17 17"><circle cx="8.5" cy="8.5" r="7.5" fill="#2a8a2a"/><path d="M8.5,8.5 L8.5,1 A7.5,7.5 0 0 0 1.2,6.8 z" fill="#2050c0"/><path d="M8.5,8.5 L1.2,6.8 A7.5,7.5 0 0 0 4,14.5 z" fill="#30a030"/><path d="M8.5,8.5 L4,14.5 A7.5,7.5 0 0 0 15.5,10 z" fill="#f0c020"/><path d="M8.5,8.5 L15.5,10 A7.5,7.5 0 0 0 8.5,1 z" fill="#e02020"/><path d="M10,2 q4,2 4,6 l-4,-1 z" fill="#111"/></svg>
<div class="t" style="left:643px;top:282.30px;font-size:15px;line-height:15px;color:#3a3c54;font-weight:normal;">&#187;</div>
<div style="position:absolute;left:413px;top:304px;width:244px;height:17px;background:linear-gradient(#f4f5fa,#ffffff 50%,#f0f1f6);border:1px solid #8a8c9a;border-radius:8px;box-sizing:border-box;"></div>
<svg style="position:absolute;left:419px;top:306px;" width="13" height="12" viewBox="0 0 13 12"><path d="M0.7,0.7 h11.6 l-4.3,4.8 v5.8 h-3 v-5.8 z" fill="#50bcf6" stroke="#1a2a80" stroke-width="1.2"/><path d="M5.2,6 v4.6" stroke="#d8f0ff" stroke-width="0.9"/></svg>
<div class="t tree" style="left:433.5px;top:327.70px;font-size:10.6px;line-height:11px;color:#1c1c24;letter-spacing:0.35px;">Part3&nbsp; (Default&lt;&lt;Default&gt;_Display State 1&gt;)</div>
<div class="t tree" style="left:453px;top:345.70px;font-size:10.6px;line-height:11px;color:#1c1c24;letter-spacing:0.1px;">Sensors</div>
<div class="t tree" style="left:453px;top:363.70px;font-size:10.6px;line-height:11px;color:#1c1c24;letter-spacing:0.1px;">Annotations</div>
<div class="t tree" style="left:453px;top:381.70px;font-size:10.6px;line-height:11px;color:#1c1c24;letter-spacing:0.1px;">Specific Gravity &thinsp;1.00</div>
<div class="t tree" style="left:452.5px;top:399.70px;font-size:10.6px;line-height:11px;color:#1c1c24;letter-spacing:0.1px;">Front Plane</div>
<div class="t tree" style="left:452.5px;top:417.70px;font-size:10.6px;line-height:11px;color:#1c1c24;letter-spacing:0.1px;">Top Plane</div>
<div class="t tree" style="left:452.5px;top:435.70px;font-size:10.6px;line-height:11px;color:#1c1c24;letter-spacing:0.1px;">Right Plane</div>
<div class="t tree" style="left:452.5px;top:453.70px;font-size:10.6px;line-height:11px;color:#1c1c24;letter-spacing:0.1px;">Origin</div>
<div class="t tree" style="left:452.5px;top:471.70px;font-size:10.6px;line-height:11px;color:#1c1c24;letter-spacing:0.1px;">Plane1</div>
<div class="t tree" style="left:452.5px;top:489.70px;font-size:10.6px;line-height:11px;color:#1c1c24;letter-spacing:0.1px;">Loft-Thin4</div>
<div class="t tree" style="left:472px;top:507.70px;font-size:10.6px;line-height:11px;color:#1c1c24;letter-spacing:0.1px;">(-) Sketch1</div>
<div class="t tree" style="left:472px;top:525.70px;font-size:10.6px;line-height:11px;color:#1c1c24;letter-spacing:0.1px;">(-) Sketch5</div>
<div class="t tree" style="left:472px;top:543.70px;font-size:10.6px;line-height:11px;color:#1c1c24;letter-spacing:0.1px;">(-) 3DSketch5</div>
<div style="position:absolute;left:421px;top:341px;width:0px;height:153px;border-left:1px dotted #8a8a94;"></div>
<div style="position:absolute;left:422px;top:352px;width:10px;height:0px;border-top:1px dotted #8a8a94;"></div>
<div style="position:absolute;left:426px;top:370px;width:6px;height:0px;border-top:1px dotted #8a8a94;"></div>
<div style="position:absolute;left:422px;top:388px;width:10px;height:0px;border-top:1px dotted #8a8a94;"></div>
<div style="position:absolute;left:422px;top:406px;width:10px;height:0px;border-top:1px dotted #8a8a94;"></div>
<div style="position:absolute;left:422px;top:424px;width:10px;height:0px;border-top:1px dotted #8a8a94;"></div>
<div style="position:absolute;left:422px;top:442px;width:10px;height:0px;border-top:1px dotted #8a8a94;"></div>
<div style="position:absolute;left:422px;top:460px;width:10px;height:0px;border-top:1px dotted #8a8a94;"></div>
<div style="position:absolute;left:422px;top:478px;width:10px;height:0px;border-top:1px dotted #8a8a94;"></div>
<div style="position:absolute;left:426px;top:497px;width:6px;height:0px;border-top:1px dotted #8a8a94;"></div>
<div style="position:absolute;left:440px;top:503px;width:0px;height:45px;border-left:1px dotted #8a8a94;"></div>
<div style="position:absolute;left:441px;top:514px;width:10px;height:0px;border-top:1px dotted #8a8a94;"></div>
<div style="position:absolute;left:441px;top:532px;width:10px;height:0px;border-top:1px dotted #8a8a94;"></div>
<div style="position:absolute;left:441px;top:550px;width:10px;height:0px;border-top:1px dotted #8a8a94;"></div>
<div style="position:absolute;left:417px;top:366px;width:9px;height:9px;background:#fff;border:1px solid #8a8c96;box-sizing:border-box;"></div>
<div style="position:absolute;left:419px;top:370px;width:5px;height:1px;background:#111;"></div>
<div style="position:absolute;left:421px;top:368px;width:1px;height:5px;background:#111;"></div>
<div style="position:absolute;left:417px;top:492px;width:9px;height:9px;background:#fff;border:1px solid #8a8c96;box-sizing:border-box;"></div>
<div style="position:absolute;left:419px;top:496px;width:5px;height:1px;background:#111;"></div>
<svg style="position:absolute;left:413px;top:324px;" width="17" height="17" viewBox="0 0 17 17"><path d="M1,5.5 L4.5,2.5 L8.5,5 L8.5,3.5 L11,1.5 L15.5,4.5 L15.5,9 L16,9.5 L16,12.5 L12.5,15.5 L1,8.5 Z" fill="#f2d33a" stroke="#1a1a10" stroke-width="1.1"/><path d="M1,5.5 L12.5,12.5 L16,9.5 M12.5,12.5 L12.5,15.5 M8.5,5 L8.5,8 L11.5,10 L11.5,6.5 L15.5,4.5 M11.5,6.5 L8.5,5" fill="none" stroke="#1a1a10" stroke-width="0.9"/></svg>
<svg style="position:absolute;left:432px;top:343px;" width="16" height="15" viewBox="0 0 16 15"><path d="M0.5,2.5 h5 l1,-1.5 h4 l1,1.5 h4 v12 h-15 z" fill="#f2d33a" stroke="#9a7010"/><circle cx="8" cy="8.5" r="4.5" fill="#fff" stroke="#222"/><line x1="6" y1="10.5" x2="10" y2="6.5" stroke="#2050c0" stroke-width="1.3"/></svg>
<svg style="position:absolute;left:432px;top:361px;" width="16" height="15" viewBox="0 0 16 15"><path d="M0.5,2.5 h5 l1,-1.5 h4 l1,1.5 h4 v12 h-15 z" fill="#f2d33a" stroke="#9a7010"/><text x="4" y="13" font-family="Liberation Serif" font-weight="bold" font-size="11" fill="#2040a0">A</text></svg>
<svg style="position:absolute;left:432px;top:379px;" width="16" height="16" viewBox="0 0 16 16"><circle cx="3" cy="3" r="2.5" fill="#e02020"/><circle cx="3" cy="8" r="2.5" fill="#3040d0"/><circle cx="3" cy="13" r="2.5" fill="#30b030"/><path d="M7,2.5 h8 M7,8 h8 M7,13.5 h8" stroke="#222" stroke-width="1.6"/></svg>
<svg style="position:absolute;left:431px;top:396px;" width="17" height="17" viewBox="0 0 17 17"><path d="M0.5,0.5 l2.5,2.5 M13.5,13.5 l2.5,2.5" stroke="#1a6a2a" stroke-width="1.4"/><polygon points="8,1.5 15,8.5 8,15.5 1,8.5" fill="#f0d83a" stroke="#141410" stroke-width="1.1"/><path d="M5.5,5.5 l5,5" stroke="#1a6a2a" stroke-width="1.3" stroke-dasharray="2,1"/></svg>
<svg style="position:absolute;left:431px;top:414px;" width="17" height="17" viewBox="0 0 17 17"><path d="M0.5,0.5 l2.5,2.5 M13.5,13.5 l2.5,2.5" stroke="#1a6a2a" stroke-width="1.4"/><polygon points="8,1.5 15,8.5 8,15.5 1,8.5" fill="#f0d83a" stroke="#141410" stroke-width="1.1"/><path d="M5.5,5.5 l5,5" stroke="#1a6a2a" stroke-width="1.3" stroke-dasharray="2,1"/></svg>
<svg style="position:absolute;left:431px;top:432px;" width="17" height="17" viewBox="0 0 17 17"><path d="M0.5,0.5 l2.5,2.5 M13.5,13.5 l2.5,2.5" stroke="#1a6a2a" stroke-width="1.4"/><polygon points="8,1.5 15,8.5 8,15.5 1,8.5" fill="#f0d83a" stroke="#141410" stroke-width="1.1"/><path d="M5.5,5.5 l5,5" stroke="#1a6a2a" stroke-width="1.3" stroke-dasharray="2,1"/></svg>
<svg style="position:absolute;left:431px;top:468px;" width="17" height="17" viewBox="0 0 17 17"><path d="M0.5,0.5 l2.5,2.5 M13.5,13.5 l2.5,2.5" stroke="#1a6a2a" stroke-width="1.4"/><polygon points="8,1.5 15,8.5 8,15.5 1,8.5" fill="#f0d83a" stroke="#141410" stroke-width="1.1"/><path d="M5.5,5.5 l5,5" stroke="#1a6a2a" stroke-width="1.3" stroke-dasharray="2,1"/></svg>
<svg style="position:absolute;left:433px;top:451px;" width="14" height="14" viewBox="0 0 14 14"><line x1="4" y1="1" x2="4" y2="12" stroke="#c02020" stroke-width="1.1"/><polygon points="1.5,3 6.5,3 4,0" fill="#c02020"/><line x1="4" y1="12" x2="12" y2="12" stroke="#c02020" stroke-width="1.1"/><polygon points="10,9.5 10,14.5 13,12" fill="#c02020"/><path d="M2,10 l4,4 M6,10 l-4,4" stroke="#333" stroke-width="0.8"/></svg>
<svg style="position:absolute;left:433px;top:487px;" width="15" height="15" viewBox="0 0 15 15"><path d="M5,1 h5 l1,5 q4,3 3,7 q-6.5,3 -13,0 q-1,-4 3,-7 z" fill="#f2d33a" stroke="#8a7010"/><ellipse cx="7.5" cy="1.8" rx="2.5" ry="1.2" fill="#ffe890"/></svg>
<svg style="position:absolute;left:450px;top:503px;" width="16" height="16" viewBox="0 0 16 16"><path d="M1,2 h5 M1,2 v8 q0,5 5,5 h9" fill="none" stroke="#111" stroke-width="1"/><path d="M3,9 l10,-6 q2,0 1.5,2 l-10,6 z" fill="#fff" stroke="#111" stroke-width="0.8"/></svg>
<svg style="position:absolute;left:450px;top:521px;" width="16" height="16" viewBox="0 0 16 16"><path d="M1,2 h5 M1,2 v8 q0,5 5,5 h9" fill="none" stroke="#111" stroke-width="1"/><path d="M3,9 l10,-6 q2,0 1.5,2 l-10,6 z" fill="#fff" stroke="#111" stroke-width="0.8"/></svg>
<svg style="position:absolute;left:450px;top:539px;" width="16" height="16" viewBox="0 0 16 16"><text x="0" y="6" font-family="Liberation Sans" font-weight="bold" font-size="6" fill="#111">3D</text><path d="M1,9 v6 h7" fill="none" stroke="#111"/><path d="M3,10 l10,-6 q2,0 1.5,2 l-10,6 z" fill="#fff" stroke="#111" stroke-width="0.8"/><path d="M10,13 v2 h3" fill="none" stroke="#111"/></svg>
<div style="position:absolute;left:413px;top:557px;width:244px;height:3px;background:linear-gradient(#4a7ac8,#2a5aa8);"></div>
<svg style="position:absolute;left:834px;top:260px;" width="17" height="16" viewBox="0 0 17 16"><polygon points="8.5,9 16,12.5 8.5,16 1,12.5" fill="#a8c8f0" stroke="#5a8ac0"/><line x1="8.5" y1="2" x2="8.5" y2="12.5" stroke="#222" stroke-width="1.2"/><polygon points="6,4 11,4 8.5,0" fill="#222"/></svg>
<svg style="position:absolute;left:858px;top:260px;" width="15" height="16" viewBox="0 0 15 16"><polygon points="7.5,0.5 14.5,4 14.5,12 7.5,15.5 0.5,12 0.5,4" fill="#b4d0f4" stroke="#5a8ac0"/><polygon points="7.5,0.5 14.5,4 7.5,7.5 0.5,4" fill="#dceafc"/><line x1="7.5" y1="7.5" x2="7.5" y2="15.5" stroke="#5a8ac0"/></svg>
<svg style="position:absolute;left:880px;top:260px;" width="16" height="16" viewBox="0 0 16 16"><rect x="0.5" y="0.5" width="15" height="15" rx="1" fill="#2b57c8" stroke="#1a3a90"/><rect x="3" y="1.5" width="10" height="6" fill="#e8ecf8"/><line x1="4" y1="3.5" x2="12" y2="3.5" stroke="#9aaad0"/><line x1="4" y1="5.5" x2="12" y2="5.5" stroke="#9aaad0"/><rect x="4" y="10" width="8" height="5.5" fill="#dfe6f6"/><rect x="6" y="11" width="2" height="4" fill="#2b57c8"/></svg>
<svg style="position:absolute;left:906px;top:260px;" width="9" height="16" viewBox="0 0 9 16"><rect x="0.5" y="0.5" width="8" height="15" rx="4" fill="#202020"/><circle cx="4.5" cy="4.8" r="2.8" fill="#d83030"/><circle cx="4.5" cy="11.2" r="2.8" fill="#30c030"/></svg>
<svg style="position:absolute;left:925px;top:260px;" width="17" height="16" viewBox="0 0 17 16"><path d="M13,7 q-5,-6 -10,0 q-3,6 4,9" fill="none" stroke="#c4c4c8" stroke-width="2.6"/><polygon points="16,2 15,10 9,8" fill="#c4c4c8"/></svg>
<svg style="position:absolute;left:948px;top:260px;" width="17" height="17" viewBox="0 0 17 17"><path d="M4,7 q7,-6 11,0 q3,6 -4,10" fill="none" stroke="#2a78e0" stroke-width="2.6"/><polygon points="1,2 2,10 9,8" fill="#2a78e0"/></svg>
<svg style="position:absolute;left:972px;top:260px;" width="17" height="17" viewBox="0 0 17 17"><circle cx="6.5" cy="6.5" r="5.3" fill="#f0f0f4" stroke="#777" stroke-width="1.5"/><circle cx="6.5" cy="6.5" r="1.5" fill="#555"/><line x1="10.5" y1="10.5" x2="16" y2="16" stroke="#5a8ad0" stroke-width="2.3"/></svg>
<svg style="position:absolute;left:995px;top:260px;" width="17" height="17" viewBox="0 0 17 17"><circle cx="6.5" cy="6.5" r="5.3" fill="#f0f0f4" stroke="#777" stroke-width="1.5" stroke-dasharray="2,1"/><line x1="10.5" y1="10.5" x2="16" y2="16" stroke="#5a8ad0" stroke-width="2.3"/></svg>
<svg style="position:absolute;left:1018px;top:260px;" width="17" height="17" viewBox="0 0 17 17"><line x1="2" y1="2" x2="11" y2="13" stroke="#5a8ad0" stroke-width="4"/><path d="M10,5 h6 M10,5 l2,-2" stroke="#3a6ac0" stroke-width="1.4" fill="none"/></svg>
<svg style="position:absolute;left:1041px;top:260px;" width="17" height="17" viewBox="0 0 17 17"><rect x="1" y="2" width="4" height="13" fill="#f2d33a" stroke="#8a7010" stroke-width="0.7"/><path d="M5,2 q6,-2 10,2 v9 q-4,4 -10,2 z" fill="#5a90e0" stroke="#2a5aa0" stroke-width="0.7"/></svg>
<svg style="position:absolute;left:1064px;top:260px;" width="18" height="17" viewBox="0 0 18 17"><polygon points="1,5 5,1 16,1 16,12 12,16 1,16" fill="#d0e0f8" stroke="#5a8ac0"/><line x1="5" y1="1" x2="12" y2="16" stroke="#c03030" stroke-width="0.7"/><rect x="1" y="5" width="11" height="11" fill="#a0c0f0" stroke="#5a8ac0" stroke-opacity="0.8"/></svg>
<svg style="position:absolute;left:1084px;top:267px;" width="6" height="4" viewBox="0 0 6 4"><polygon points="0,0 5,0 2.5,3" fill="#333"/></svg>
<svg style="position:absolute;left:1097px;top:260px;" width="17" height="17" viewBox="0 0 17 17"><polygon points="1,5 5,1 16,1 16,12 12,16 1,16" fill="#e6eefc" stroke="#4a6aa0"/><rect x="1" y="5" width="11" height="11" fill="#fafcff" stroke="#4a6aa0"/><polygon points="12,5 16,1 16,12 12,16" fill="#5a8ad0"/></svg>
<svg style="position:absolute;left:1117px;top:267px;" width="6" height="4" viewBox="0 0 6 4"><polygon points="0,0 5,0 2.5,3" fill="#333"/></svg>
<svg style="position:absolute;left:1129px;top:262px;" width="18" height="13" viewBox="0 0 18 13"><path d="M1,9 q0,-8 5,-8" fill="none" stroke="#888" stroke-width="1.5"/><circle cx="5" cy="8" r="3.5" fill="none" stroke="#888" stroke-width="1.5"/><circle cx="13" cy="8" r="3.5" fill="none" stroke="#888" stroke-width="1.5"/></svg>
<svg style="position:absolute;left:1150px;top:267px;" width="6" height="4" viewBox="0 0 6 4"><polygon points="0,0 5,0 2.5,3" fill="#333"/></svg>
<svg style="position:absolute;left:1162px;top:260px;" width="17" height="17" viewBox="0 0 17 17"><circle cx="8.5" cy="8.5" r="7.5" fill="#2a8a2a"/><path d="M8.5,8.5 L8.5,1 A7.5,7.5 0 0 0 1.2,6.8 z" fill="#3a70e0"/><path d="M8.5,8.5 L4,14.5 A7.5,7.5 0 0 0 15.5,10 z" fill="#f0c020"/><path d="M8.5,8.5 L15.5,10 A7.5,7.5 0 0 0 8.5,1 z" fill="#e02020"/></svg>
<svg style="position:absolute;left:1185px;top:260px;" width="19" height="17" viewBox="0 0 19 17"><circle cx="9" cy="7" r="6" fill="#2a8a2a"/><path d="M9,7 L9,1 A6,6 0 0 0 3,7 z" fill="#3a70e0"/><path d="M9,7 L15,7 A6,6 0 0 0 9,1 z" fill="#e02020"/><path d="M1,16 l3,-5 l3,5 l3,-5 l3,5 l3,-5 l2,5" fill="none" stroke="#444" stroke-width="1"/><ellipse cx="9" cy="13" rx="8" ry="2" fill="#ccd" opacity="0.5"/></svg>
<svg style="position:absolute;left:1205.5px;top:267px;" width="6" height="4" viewBox="0 0 6 4"><polygon points="0,0 5,0 2.5,3" fill="#333"/></svg>
<svg style="position:absolute;left:1219px;top:260px;" width="18" height="17" viewBox="0 0 18 17"><rect x="1" y="4" width="15" height="10" fill="#f0f0f2" stroke="#555"/><rect x="3" y="6" width="11" height="6" fill="#d8dce8"/><line x1="8.5" y1="14" x2="8.5" y2="16" stroke="#555"/><line x1="4" y1="16.5" x2="13" y2="16.5" stroke="#555"/><path d="M8,4 q4,-4 9,-2 l-3,3 z" fill="#e0b060"/></svg>
<svg style="position:absolute;left:1238.5px;top:267px;" width="6" height="4" viewBox="0 0 6 4"><polygon points="0,0 5,0 2.5,3" fill="#333"/></svg>
<div style="position:absolute;left:1357px;top:270px;width:9px;height:2px;background:#6a6c78;"></div>
<svg style="position:absolute;left:1379px;top:262px;" width="12" height="11" viewBox="0 0 12 11"><rect x="3.5" y="1" width="7.5" height="6" fill="none" stroke="#6a6c78" stroke-width="1.6"/><rect x="1" y="4" width="7.5" height="6" fill="#fff" stroke="#6a6c78" stroke-width="1.6"/></svg>
<svg style="position:absolute;left:1403px;top:263px;" width="11" height="10" viewBox="0 0 11 10"><path d="M1,1 L10,9 M10,1 L1,9" stroke="#6a6c78" stroke-width="2.2"/></svg>
<div style="position:absolute;left:1402px;top:314px;width:25px;height:23px;background:linear-gradient(90deg,#b8bbcc,#cfd2e0);border:1px solid #8a8c9c;border-right:none;border-radius:4px 0 0 4px;box-sizing:border-box;"></div>
<div style="position:absolute;left:1402px;top:339px;width:25px;height:22px;background:linear-gradient(90deg,#b8bbcc,#cfd2e0);border:1px solid #8a8c9c;border-right:none;border-radius:4px 0 0 4px;box-sizing:border-box;"></div>
<div style="position:absolute;left:1402px;top:363px;width:25px;height:22px;background:linear-gradient(90deg,#b8bbcc,#cfd2e0);border:1px solid #8a8c9c;border-right:none;border-radius:4px 0 0 4px;box-sizing:border-box;"></div>
<div style="position:absolute;left:1402px;top:387px;width:25px;height:23px;background:linear-gradient(90deg,#b8bbcc,#cfd2e0);border:1px solid #8a8c9c;border-right:none;border-radius:4px 0 0 4px;box-sizing:border-box;"></div>
<div style="position:absolute;left:1402px;top:411px;width:25px;height:21px;background:linear-gradient(90deg,#e6e8f4,#f4f5fa);border:1px solid #8a8c9c;border-right:none;border-radius:4px 0 0 4px;box-sizing:border-box;"></div>
<div style="position:absolute;left:1402px;top:434px;width:25px;height:23px;background:linear-gradient(90deg,#b8bbcc,#cfd2e0);border:1px solid #8a8c9c;border-right:none;border-radius:4px 0 0 4px;box-sizing:border-box;"></div>
<svg style="position:absolute;left:1406px;top:318px;" width="17" height="16" viewBox="0 0 17 16"><polygon points="8.5,1 1,8 3,8 3,15 14,15 14,8 16,8" fill="#ffd850" stroke="#8a6010"/><rect x="7" y="9" width="4" height="6" fill="#c08020"/><rect x="12" y="1" width="2.5" height="5" fill="#d03030"/></svg>
<svg style="position:absolute;left:1406px;top:342px;" width="17" height="16" viewBox="0 0 17 16"><rect x="1" y="9" width="4" height="6" fill="#30a030" stroke="#111" stroke-width="0.7"/><rect x="6" y="6" width="4" height="9" fill="#f0c020" stroke="#111" stroke-width="0.7"/><rect x="11" y="2" width="4" height="13" fill="#3a70d0" stroke="#111" stroke-width="0.7"/></svg>
<svg style="position:absolute;left:1406px;top:366px;" width="17" height="16" viewBox="0 0 17 16"><path d="M0.5,3.5 h5 l1.5,1.5 h7 v9 h-13.5 z" fill="#f0c850" stroke="#a07810"/><path d="M2,7 h14.5 l-2,7.5 h-14 z" fill="#ffe890" stroke="#a07810"/></svg>
<svg style="position:absolute;left:1406px;top:390px;" width="17" height="17" viewBox="0 0 17 17"><rect x="1" y="1" width="15" height="10" fill="#fff" stroke="#444"/><rect x="3" y="3" width="5" height="2" fill="#f0c020"/><rect x="3" y="7" width="5" height="2" fill="#a0c0e0"/><rect x="10" y="3" width="4" height="2" fill="#6a8ac0"/><path d="M1,14 h9" stroke="#2030c0" stroke-width="1.6"/><polygon points="9,11 13,14 9,17" fill="#2030c0"/></svg>
<svg style="position:absolute;left:1406px;top:414px;" width="17" height="17" viewBox="0 0 17 17"><circle cx="8.5" cy="8" r="7" fill="#2a9a2a"/><path d="M8.5,8 L8.5,1 A7,7 0 0 0 1.5,8 z" fill="#3a70e0"/><path d="M8.5,8 L15.5,8 A7,7 0 0 0 8.5,1 z" fill="#e02020"/><path d="M8.5,8 L8.5,15 A7,7 0 0 0 15.5,8 z" fill="#f0c020"/></svg>
<svg style="position:absolute;left:1406px;top:437px;" width="17" height="17" viewBox="0 0 17 17"><rect x="2" y="6" width="13" height="10" fill="#f4f0e4" stroke="#555"/><line x1="4" y1="10" x2="13" y2="10" stroke="#999"/><line x1="4" y1="13" x2="13" y2="13" stroke="#999"/><path d="M1,7 l7,-6 l7,6" fill="none" stroke="#8a5a2a" stroke-width="1.3"/><path d="M9,3 q4,-3 7,0 l-2,3 z" fill="#e0b060"/></svg>
<div style="position:absolute;left:1426px;top:253px;width:2px;height:520px;background:#c8cad6;"></div>
<div style="position:absolute;left:658px;top:500px;width:10px;height:28px;background:linear-gradient(90deg,#e8e9f2,#d8daf0);border:1px solid #4a4c5c;border-left:none;border-radius:0 3px 3px 0;box-sizing:border-box;"></div>
<svg style="position:absolute;left:661px;top:504px;" width="5" height="5" viewBox="0 0 5 5"><polygon points="4,0 4,5 0,2.5" fill="#4a4c64"/></svg>
<svg style="position:absolute;left:661px;top:512px;" width="5" height="5" viewBox="0 0 5 5"><polygon points="4,0 4,5 0,2.5" fill="#4a4c64"/></svg>
<svg style="position:absolute;left:661px;top:520px;" width="5" height="5" viewBox="0 0 5 5"><polygon points="4,0 4,5 0,2.5" fill="#4a4c64"/></svg>
<svg style="position:absolute;left:0;top:0" width="1880" height="842"><defs>
<linearGradient id="hb" gradientUnits="userSpaceOnUse" x1="1000" y1="420" x2="930" y2="690">
<stop offset="0" stop-color="#9296b6"/><stop offset="0.35" stop-color="#9a9ec2"/><stop offset="0.68" stop-color="#b8bcea"/><stop offset="1" stop-color="#caccf6"/></linearGradient>
<linearGradient id="hr" gradientUnits="userSpaceOnUse" x1="990" y1="560" x2="1075" y2="600">
<stop offset="0" stop-color="#b8bcf4" stop-opacity="0"/><stop offset="0.6" stop-color="#b4b8f2" stop-opacity="0.55"/><stop offset="1" stop-color="#aeb2ee" stop-opacity="0.9"/></linearGradient>
<linearGradient id="hi" gradientUnits="userSpaceOnUse" x1="945" y1="390" x2="1060" y2="360">
<stop offset="0" stop-color="#c4c8fc"/><stop offset="0.3" stop-color="#bcc0f4"/><stop offset="0.55" stop-color="#aaaed0"/><stop offset="1" stop-color="#a6aac8"/></linearGradient>
<radialGradient id="hl" cx="0.5" cy="0.5" r="0.5">
<stop offset="0" stop-color="#ffffff"/><stop offset="0.5" stop-color="#eceeff" stop-opacity="0.8"/><stop offset="1" stop-color="#c8ccf6" stop-opacity="0"/></radialGradient>
</defs><path d="M934,362 C934,350 945,346 962,351 C1010,365 1082,430 1092,474 C1095,486 1091,492 1086,495 C1074,515 1066,545 1060,580 C1054,612 1040,632 1014,650 C978,674 930,689 891,692 C874,684 861,672 856,659 C885,642 937,604 946,571 C955,545 957,510 953,480 C949,440 936,400 934,362 Z" fill="url(#hb)"/><path d="M934,362 C934,350 945,346 962,351 C1010,365 1082,430 1092,474 C1095,486 1091,492 1086,495 C1074,515 1066,545 1060,580 C1054,612 1040,632 1014,650 C978,674 930,689 891,692 C874,684 861,672 856,659 C885,642 937,604 946,571 C955,545 957,510 953,480 C949,440 936,400 934,362 Z" fill="url(#hr)"/><clipPath id="hc"><path d="M934,362 C934,350 945,346 962,351 C1010,365 1082,430 1092,474 C1095,486 1091,492 1086,495 C1074,515 1066,545 1060,580 C1054,612 1040,632 1014,650 C978,674 930,689 891,692 C874,684 861,672 856,659 C885,642 937,604 946,571 C955,545 957,510 953,480 C949,440 936,400 934,362 Z"/></clipPath><filter id="bl" x="-50%" y="-50%" width="200%" height="200%"><feGaussianBlur stdDeviation="7"/></filter><filter id="bl2" x="-50%" y="-50%" width="200%" height="200%"><feGaussianBlur stdDeviation="4"/></filter><g clip-path="url(#hc)"><path d="M995,540 C985,580 960,615 905,655" fill="none" stroke="#d0d4fa" stroke-width="24" opacity="0.5" filter="url(#bl)"/><path d="M1040,500 C1032,550 1020,600 990,635" fill="none" stroke="#9ea2d4" stroke-width="14" opacity="0.3" filter="url(#bl)"/><path d="M1086,500 C1074,520 1066,548 1060,580 C1054,612 1040,632 1014,650" fill="none" stroke="#bcc0fa" stroke-width="6" opacity="0.6" filter="url(#bl2)"/></g><ellipse cx="913" cy="653" rx="36" ry="8" transform="rotate(-29 913 653)" fill="url(#hl)"/><path d="M934,362 C934,350 945,346 962,351 C1010,365 1082,430 1092,474 C1095,486 1091,492 1086,495 C1035,476 952,405 934,362 Z" fill="url(#hi)"/><path d="M934,362 C934,350 945,346 962,351 C1010,365 1082,430 1092,474 C1095,486 1091,492 1086,495 C1074,515 1066,545 1060,580 C1054,612 1040,632 1014,650 C978,674 930,689 891,692 C874,684 861,672 856,659 C885,642 937,604 946,571 C955,545 957,510 953,480 C949,440 936,400 934,362 Z" fill="none" stroke="#1c1c2c" stroke-width="1.1"/><path d="M1086,495 C1035,476 952,405 934,362" fill="none" stroke="#26263a" stroke-width="1" stroke-dasharray="4,1"/></svg>
<svg style="position:absolute;left:665px;top:688px;" width="45" height="60" viewBox="0 0 45 60"><text x="5" y="14" font-family="Liberation Serif" font-size="11" fill="#2020b0">Z</text><text x="27" y="13" font-family="Liberation Sans" font-size="8" fill="#c02020">X</text><circle cx="32" cy="18.5" r="4.2" fill="#b02020"/><line x1="35.6" y1="28" x2="18" y2="16.5" stroke="#2828c8" stroke-width="3.6"/><polygon points="12.4,12.8 21.3,13.9 16.9,20.5" fill="#3a3ad8"/><line x1="35.6" y1="28" x2="21" y2="43" stroke="#2a8a2a" stroke-width="3.6"/><polygon points="16.3,48 25.4,44.3 19.7,38.7" fill="#206a20"/><text x="9.5" y="57" font-family="Liberation Sans" font-size="9" fill="#2a7a2a">Y</text></svg>
<div style="position:absolute;left:413px;top:773px;width:1013px;height:17px;background:#d8dae6;"></div>
<div style="position:absolute;left:413px;top:773px;width:1013px;height:2px;background:#2a2c38;"></div>
<div style="position:absolute;left:414px;top:776px;width:16px;height:13px;background:linear-gradient(#b4b7c8,#a4a7ba);border-right:1px solid #8a8c9c;"></div>
<div style="position:absolute;left:430px;top:776px;width:16px;height:13px;background:linear-gradient(#b4b7c8,#a4a7ba);border-right:1px solid #8a8c9c;"></div>
<div style="position:absolute;left:447px;top:776px;width:16px;height:13px;background:linear-gradient(#b4b7c8,#a4a7ba);border-right:1px solid #8a8c9c;"></div>
<div style="position:absolute;left:464px;top:776px;width:16px;height:13px;background:linear-gradient(#b4b7c8,#a4a7ba);border-right:1px solid #8a8c9c;"></div>
<svg style="position:absolute;left:418.0px;top:778px;" width="10" height="10" viewBox="0 0 10 10"><rect x="1" y="1" width="1.5" height="8" fill="#7a7c8c"/><polygon points="8,1 8,9 3,5" fill="#7a7c8c"/></svg>
<svg style="position:absolute;left:434.5px;top:778px;" width="10" height="10" viewBox="0 0 10 10"><polygon points="7,1 7,9 2,5" fill="#7a7c8c"/></svg>
<svg style="position:absolute;left:451.0px;top:778px;" width="10" height="10" viewBox="0 0 10 10"><polygon points="2,1 2,9 7,5" fill="#7a7c8c"/></svg>
<svg style="position:absolute;left:467.5px;top:778px;" width="10" height="10" viewBox="0 0 10 10"><polygon points="1,1 1,9 6,5" fill="#7a7c8c"/><rect x="7" y="1" width="1.5" height="8" fill="#7a7c8c"/></svg>
<div style="position:absolute;left:482px;top:775px;width:55px;height:14px;background:linear-gradient(#f0f1f6,#dcdeea);border:1px solid #5a5c6c;border-top:none;box-sizing:border-box;"></div>
<div class="t" style="left:492.4px;top:775.07px;font-size:11.5px;line-height:11.5px;color:#1c1c24;font-weight:bold;">Model</div>
<div style="position:absolute;left:536px;top:775px;width:103px;height:14px;background:#c2c5d4;border:1px solid #5a5c6c;border-top:none;box-sizing:border-box;"></div>
<div class="t" style="left:545px;top:774.90px;font-size:11.7px;line-height:11.7px;color:#26283a;font-weight:normal;">Motion Study 1</div>
<div style="position:absolute;left:413px;top:789px;width:1013px;height:28px;background:linear-gradient(#f0f1f7 0px,#e4e6f0 12px,#d0d2e0 26px,#c8cada 28px);"></div>
<div style="position:absolute;left:413px;top:789px;width:754px;height:28px;background:linear-gradient(#f2f3f8 0px,#e6e8f0 10px,#d8dae6 22px,#cbcddb 28px);"></div>
<div style="position:absolute;left:1166px;top:790px;width:1px;height:27px;background:#a4a6b4;"></div>
<div style="position:absolute;left:413px;top:817px;width:1013px;height:1px;background:#8a8c9a;"></div>
<div style="position:absolute;left:417px;top:794px;width:1px;height:1px;background:#fff;border-right:1px solid #777;border-bottom:1px solid #777;"></div>
<div style="position:absolute;left:417px;top:797px;width:1px;height:1px;background:#fff;border-right:1px solid #777;border-bottom:1px solid #777;"></div>
<div style="position:absolute;left:417px;top:800px;width:1px;height:1px;background:#fff;border-right:1px solid #777;border-bottom:1px solid #777;"></div>
<div style="position:absolute;left:417px;top:803px;width:1px;height:1px;background:#fff;border-right:1px solid #777;border-bottom:1px solid #777;"></div>
<div style="position:absolute;left:417px;top:806px;width:1px;height:1px;background:#fff;border-right:1px solid #777;border-bottom:1px solid #777;"></div>
<div style="position:absolute;left:417px;top:809px;width:1px;height:1px;background:#fff;border-right:1px solid #777;border-bottom:1px solid #777;"></div>
<div style="position:absolute;left:417px;top:812px;width:1px;height:1px;background:#fff;border-right:1px solid #777;border-bottom:1px solid #777;"></div>
<svg style="position:absolute;left:431px;top:793px;" width="12" height="12" viewBox="0 0 12 12"><path d="M0.5,0.5 h10 l-3.5,4.5 v5 h-3 v-5 z" fill="none" stroke="#a8a8b0" stroke-width="1.2"/></svg>
<svg style="position:absolute;left:452px;top:793px;" width="16" height="16" viewBox="0 0 16 16"><path d="M0.5,0.5 h8 l-3,3.5 v4 h-2 v-4 z M4,4 h8 l-3,3.5 v4 h-2 v-4 z M7,7 h8 l-3,3.5 v4.5 h-2 v-4.5 z" fill="none" stroke="#a8a8b0" stroke-width="1"/></svg>
<svg style="position:absolute;left:475px;top:793px;" width="16" height="16" viewBox="0 0 16 16"><path d="M0.5,0.5 h8 l-3,3.5 v4 h-2 v-4 z M4,4 h8 l-3,3.5 v4 h-2 v-4 z M7,7 h8 l-3,3.5 v4.5 h-2 v-4.5 z" fill="#cce0ff" stroke="#2050c0" stroke-width="1.2"/></svg>
<div style="position:absolute;left:496px;top:792px;width:35px;height:23px;background:linear-gradient(#c8cce8,#a8acd0);border:1px solid #7a7e9e;border-radius:4px;box-sizing:border-box;"></div>
<div style="position:absolute;left:517px;top:793px;width:13px;height:21px;background:linear-gradient(#e8eaf4,#c8cade);border-radius:0 3px 3px 0;"></div>
<div style="position:absolute;left:517px;top:793px;width:1px;height:21px;background:#7a7e9e;"></div>
<svg style="position:absolute;left:501px;top:795px;" width="14" height="16" viewBox="0 0 14 16"><path d="M2,1 v12 l3,-3 l2.5,5 l2,-1 l-2.5,-5 h4 z" fill="#fff" stroke="#222" stroke-width="1"/></svg>
<svg style="position:absolute;left:520.5px;top:802px;" width="6" height="4" viewBox="0 0 6 4"><polygon points="0,0 5,0 2.5,3" fill="#1a1a2a"/></svg>
<svg style="position:absolute;left:534px;top:795px;" width="16" height="16" viewBox="0 0 16 16"><path d="M2,1 v12 l3,-3 l2.5,5 l2,-1 l-2.5,-5 h4 z" fill="#eee" stroke="#aaa" stroke-width="1"/><path d="M8,4 l6,6" stroke="#999" stroke-width="2"/></svg>
<div style="position:absolute;left:557px;top:794px;width:1px;height:19px;background:#9a9cac;"></div>
<div style="position:absolute;left:558px;top:794px;width:1px;height:19px;background:#fff;"></div>
<svg style="position:absolute;left:566px;top:794px;" width="17" height="17" viewBox="0 0 17 17"><circle cx="4" cy="12" r="3" fill="#30c030" stroke="#1a701a"/><path d="M5,0.5 h9 l-3.2,4 v5 h-2.6 v-5 z" fill="#cce0ff" stroke="#3a70d0" stroke-width="1.2"/></svg>
<svg style="position:absolute;left:589px;top:794px;" width="17" height="17" viewBox="0 0 17 17"><rect x="1" y="2" width="3" height="13" rx="1.5" fill="#40c040" stroke="#1a701a"/><path d="M5,0.5 h9 l-3.2,4 v5 h-2.6 v-5 z" fill="#cce0ff" stroke="#3a70d0" stroke-width="1.2"/></svg>
<svg style="position:absolute;left:611px;top:794px;" width="17" height="17" viewBox="0 0 17 17"><rect x="1" y="5" width="10" height="10" fill="#30c030" stroke="#1a701a"/><path d="M5,0.5 h9 l-3.2,4 v5 h-2.6 v-5 z" fill="#cce0ff" stroke="#3a70d0" stroke-width="1.2"/></svg>
<svg style="position:absolute;left:634px;top:794px;" width="17" height="17" viewBox="0 0 17 17"><path d="M1,10 l7,-5 l3,5 l-6,5 z" fill="#f08020" stroke="#c04010"/><path d="M5,0.5 h9 l-3.2,4 v5 h-2.6 v-5 z" fill="#cce0ff" stroke="#3a70d0" stroke-width="1.2"/></svg>
<svg style="position:absolute;left:658px;top:794px;" width="17" height="17" viewBox="0 0 17 17"><rect x="1" y="6" width="9" height="9" fill="#ffe45a" stroke="#8a7010"/><path d="M5,0.5 h9 l-3.2,4 v5 h-2.6 v-5 z" fill="#cce0ff" stroke="#3a70d0" stroke-width="1.2"/></svg>
<svg style="position:absolute;left:680px;top:794px;" width="17" height="17" viewBox="0 0 17 17"><path d="M1,5 l12,11" stroke="#2a8a2a" stroke-width="1.5" stroke-dasharray="2,1.5"/><path d="M5,0.5 h9 l-3.2,4 v5 h-2.6 v-5 z" fill="#cce0ff" stroke="#3a70d0" stroke-width="1.2"/></svg>
<svg style="position:absolute;left:704px;top:794px;" width="17" height="17" viewBox="0 0 17 17"><polygon points="1,10 6,5 11,10 6,15" fill="#f0e040" stroke="#6a6010"/><line x1="1" y1="5" x2="12" y2="16" stroke="#2a8a2a"/><path d="M5,0.5 h9 l-3.2,4 v5 h-2.6 v-5 z" fill="#cce0ff" stroke="#3a70d0" stroke-width="1.2"/></svg>
<svg style="position:absolute;left:728px;top:794px;" width="17" height="17" viewBox="0 0 17 17"><path d="M3,10 v6 M0,13 h6 M1,11 l4,4 M5,11 l-4,4" stroke="#2050d0" stroke-width="1.2"/><path d="M5,0.5 h9 l-3.2,4 v5 h-2.6 v-5 z" fill="#cce0ff" stroke="#3a70d0" stroke-width="1.2"/></svg>
<svg style="position:absolute;left:749px;top:794px;" width="17" height="17" viewBox="0 0 17 17"><path d="M1,8 v7 h10" fill="none" stroke="#2020a0" stroke-width="2"/><path d="M4,12 l6,-4" stroke="#c0a020" stroke-width="2"/><path d="M5,0.5 h9 l-3.2,4 v5 h-2.6 v-5 z" fill="#cce0ff" stroke="#3a70d0" stroke-width="1.2"/></svg>
<svg style="position:absolute;left:771px;top:794px;" width="17" height="17" viewBox="0 0 17 17"><rect x="1" y="2" width="3" height="14" fill="#40c040" stroke="#1a701a"/><path d="M4,15 h9" stroke="#2050d0" stroke-width="2"/><path d="M5,0.5 h9 l-3.2,4 v5 h-2.6 v-5 z" fill="#cce0ff" stroke="#3a70d0" stroke-width="1.2"/></svg>
<svg style="position:absolute;left:795px;top:794px;" width="17" height="17" viewBox="0 0 17 17"><line x1="1" y1="4" x2="13" y2="16" stroke="#222" stroke-width="2"/><circle cx="7" cy="10" r="3" fill="#f0d040" stroke="#8a7010"/><path d="M5,0.5 h9 l-3.2,4 v5 h-2.6 v-5 z" fill="#cce0ff" stroke="#3a70d0" stroke-width="1.2"/></svg>
<svg style="position:absolute;left:818px;top:794px;" width="17" height="17" viewBox="0 0 17 17"><circle cx="8" cy="10" r="6" fill="none" stroke="#2030a0" stroke-dasharray="2,1"/><path d="M8,6 v8 M4,10 h8" stroke="#2030c0" stroke-width="1.5"/><path d="M5,0.5 h9 l-3.2,4 v5 h-2.6 v-5 z" fill="#cce0ff" stroke="#3a70d0" stroke-width="1.2"/></svg>
<svg style="position:absolute;left:841px;top:794px;" width="17" height="17" viewBox="0 0 17 17"><rect x="1" y="9" width="6" height="6" fill="#fff" stroke="#222"/><rect x="7" y="9" width="7" height="5" fill="#fff" stroke="#222"/><path d="M1,11 h14" stroke="#2030c0" stroke-width="1.5"/><path d="M5,0.5 h9 l-3.2,4 v5 h-2.6 v-5 z" fill="#cce0ff" stroke="#3a70d0" stroke-width="1.2"/></svg>
<svg style="position:absolute;left:864px;top:794px;" width="17" height="17" viewBox="0 0 17 17"><path d="M1,12 l6,4 l7,-9" fill="none" stroke="#111" stroke-width="1.2"/><path d="M2,10 l9,-6" stroke="#2030c0" stroke-width="2"/><path d="M5,0.5 h9 l-3.2,4 v5 h-2.6 v-5 z" fill="#cce0ff" stroke="#3a70d0" stroke-width="1.2"/></svg>
<svg style="position:absolute;left:888px;top:794px;" width="17" height="17" viewBox="0 0 17 17"><path d="M1,10 l4,5 l4,-8" fill="none" stroke="#555" stroke-width="1.2"/><path d="M5,0.5 h9 l-3.2,4 v5 h-2.6 v-5 z" fill="#cce0ff" stroke="#3a70d0" stroke-width="1.2"/></svg>
<svg style="position:absolute;left:910px;top:794px;" width="17" height="17" viewBox="0 0 17 17"><rect x="1" y="8" width="12" height="8" fill="#fff" stroke="#222"/><circle cx="8" cy="12" r="2.5" fill="none" stroke="#222"/><path d="M5,0.5 h9 l-3.2,4 v5 h-2.6 v-5 z" fill="#cce0ff" stroke="#3a70d0" stroke-width="1.2"/></svg>
<svg style="position:absolute;left:932px;top:794px;" width="17" height="17" viewBox="0 0 17 17"><circle cx="7" cy="11" r="5" fill="none" stroke="#222"/><text x="4" y="14.5" font-size="8" font-family="Liberation Serif" fill="#222">N</text><path d="M5,0.5 h9 l-3.2,4 v5 h-2.6 v-5 z" fill="#cce0ff" stroke="#3a70d0" stroke-width="1.2"/></svg>
<svg style="position:absolute;left:956px;top:794px;" width="17" height="17" viewBox="0 0 17 17"><rect x="1" y="6" width="12" height="10" fill="#fff" stroke="#222"/><text x="3" y="15" font-size="9" font-family="Liberation Serif" fill="#222">A</text><path d="M5,0.5 h9 l-3.2,4 v5 h-2.6 v-5 z" fill="#cce0ff" stroke="#3a70d0" stroke-width="1.2"/></svg>
<svg style="position:absolute;left:979px;top:794px;" width="17" height="17" viewBox="0 0 17 17"><path d="M1,16 q4,-10 8,-7 l5,-4" fill="none" stroke="#222" stroke-width="1.2"/><path d="M5,0.5 h9 l-3.2,4 v5 h-2.6 v-5 z" fill="#cce0ff" stroke="#3a70d0" stroke-width="1.2"/></svg>
<svg style="position:absolute;left:1003px;top:794px;" width="17" height="17" viewBox="0 0 17 17"><path d="M1,6 h12 M3,8 l2,8 M7,8 l2,8 M11,8 l2,8" stroke="#222" stroke-width="1"/><path d="M5,0.5 h9 l-3.2,4 v5 h-2.6 v-5 z" fill="#cce0ff" stroke="#3a70d0" stroke-width="1.2"/></svg>
<svg style="position:absolute;left:1025px;top:794px;" width="17" height="17" viewBox="0 0 17 17"><circle cx="7" cy="11" r="5" fill="none" stroke="#222"/><text x="4" y="14.5" font-size="8" font-family="Liberation Serif" fill="#222">A</text><path d="M5,0.5 h9 l-3.2,4 v5 h-2.6 v-5 z" fill="#cce0ff" stroke="#3a70d0" stroke-width="1.2"/></svg>
<svg style="position:absolute;left:1048px;top:794px;" width="17" height="17" viewBox="0 0 17 17"><path d="M2,4 v8 l4,4 l4,-4 v-8" fill="none" stroke="#222" stroke-width="1.2"/><path d="M5,0.5 h9 l-3.2,4 v5 h-2.6 v-5 z" fill="#cce0ff" stroke="#3a70d0" stroke-width="1.2"/></svg>
<svg style="position:absolute;left:1071px;top:794px;" width="17" height="17" viewBox="0 0 17 17"><rect x="1" y="7" width="11" height="9" fill="#fff" stroke="#222"/><text x="3" y="15" font-size="8" font-family="Liberation Serif" fill="#222">A</text><path d="M5,0.5 h9 l-3.2,4 v5 h-2.6 v-5 z" fill="#cce0ff" stroke="#3a70d0" stroke-width="1.2"/></svg>
<svg style="position:absolute;left:1093px;top:794px;" width="17" height="17" viewBox="0 0 17 17"><circle cx="7" cy="10" r="6" fill="#fff" stroke="#111"/><path d="M7,4 A6,6 0 0 1 13,10 h-6 z M7,16 A6,6 0 0 1 1,10 h6 z" fill="#111"/><path d="M5,0.5 h9 l-3.2,4 v5 h-2.6 v-5 z" fill="#cce0ff" stroke="#3a70d0" stroke-width="1.2"/></svg>
<svg style="position:absolute;left:1117px;top:794px;" width="17" height="17" viewBox="0 0 17 17"><path d="M0,14 h14" stroke="#111" stroke-width="2"/><rect x="8" y="11" width="5" height="5" fill="#40c040" stroke="#1a601a"/><path d="M5,0.5 h9 l-3.2,4 v5 h-2.6 v-5 z" fill="#cce0ff" stroke="#3a70d0" stroke-width="1.2"/></svg>
<svg style="position:absolute;left:1140px;top:794px;" width="17" height="17" viewBox="0 0 17 17"><path d="M0,14 h14" stroke="#111" stroke-width="2"/><rect x="4" y="11" width="5" height="5" fill="#40c040" stroke="#1a601a"/><path d="M5,0.5 h9 l-3.2,4 v5 h-2.6 v-5 z" fill="#cce0ff" stroke="#3a70d0" stroke-width="1.2"/></svg>
<div style="position:absolute;left:413px;top:818px;width:1013px;height:3px;background:linear-gradient(#f4f4f8,#d8d8e0);"></div>
<div style="position:absolute;left:413px;top:821px;width:1013px;height:16px;background:#dcd8d0;"></div>
<div style="position:absolute;left:413px;top:837px;width:1013px;height:2px;background:#c8c8d0;"></div>
<div class="t" style="left:414.6px;top:823.61px;font-size:10.5px;line-height:10.5px;color:#1c1c24;font-weight:normal;">SolidWorks Premium 2011 x64 Edition</div>
<div style="position:absolute;left:1216px;top:822px;width:3px;height:14px;background:#b4b4bc;"></div>
<div style="position:absolute;left:1224px;top:822px;width:3px;height:14px;background:#b4b4bc;"></div>
<div style="position:absolute;left:1233px;top:822px;width:3px;height:14px;background:#b4b4bc;"></div>
<div style="position:absolute;left:1240px;top:822px;width:3px;height:14px;background:#b4b4bc;"></div>
<div style="position:absolute;left:1227px;top:822px;width:5px;height:14px;background:#f4f4f4;"></div>
<div style="position:absolute;left:1236px;top:822px;width:4px;height:14px;background:#f4f4f4;"></div>
<div style="position:absolute;left:1242px;top:822px;width:64px;height:15px;background:#dcd8d0;border:1px solid #f6f6f6;border-left-color:#a8a8b0;border-top-color:#a8a8b0;box-sizing:border-box;"></div>
<div class="t" style="left:1244.4px;top:824.14px;font-size:10.7px;line-height:10.7px;color:#1c1c24;font-weight:normal;">Editing Part</div>
<div style="position:absolute;left:1308px;top:822px;width:3px;height:14px;background:#b4b4bc;"></div>
<div style="position:absolute;left:1316px;top:822px;width:3px;height:14px;background:#b4b4bc;"></div>
<div style="position:absolute;left:1325px;top:822px;width:3px;height:14px;background:#b4b4bc;"></div>
<div style="position:absolute;left:1356px;top:822px;width:3px;height:14px;background:#b4b4bc;"></div>
<div style="position:absolute;left:1364px;top:822px;width:3px;height:14px;background:#b4b4bc;"></div>
<div style="position:absolute;left:1372px;top:822px;width:3px;height:14px;background:#b4b4bc;"></div>
<div style="position:absolute;left:1380px;top:822px;width:3px;height:14px;background:#b4b4bc;"></div>
<div style="position:absolute;left:1388px;top:822px;width:3px;height:14px;background:#b4b4bc;"></div>
<div style="position:absolute;left:1415px;top:822px;width:3px;height:14px;background:#b4b4bc;"></div>
<div style="position:absolute;left:1422px;top:822px;width:3px;height:14px;background:#b4b4bc;"></div>
<div style="position:absolute;left:1311px;top:822px;width:4px;height:14px;background:#f4f4f4;"></div>
<div style="position:absolute;left:1319px;top:822px;width:4px;height:14px;background:#f4f4f4;"></div>
<div style="position:absolute;left:1333px;top:822px;width:13px;height:13px;background:#fff;border:1px solid #2a5a8a;box-sizing:border-box;"></div>
<div class="t" style="left:1335.5px;top:823.69px;font-size:11px;line-height:11px;color:#20a020;font-weight:bold;">?</div>
<svg style="position:absolute;left:1396px;top:822px;" width="16" height="14" viewBox="0 0 16 14"><path d="M1,9 l8,-8 h6 v6 l-8,7 z" fill="#f0c830" stroke="#a08010" transform="rotate(-10 8 7)"/><circle cx="12" cy="4" r="1.5" fill="#fff" stroke="#a08010"/></svg>
</body></html>
